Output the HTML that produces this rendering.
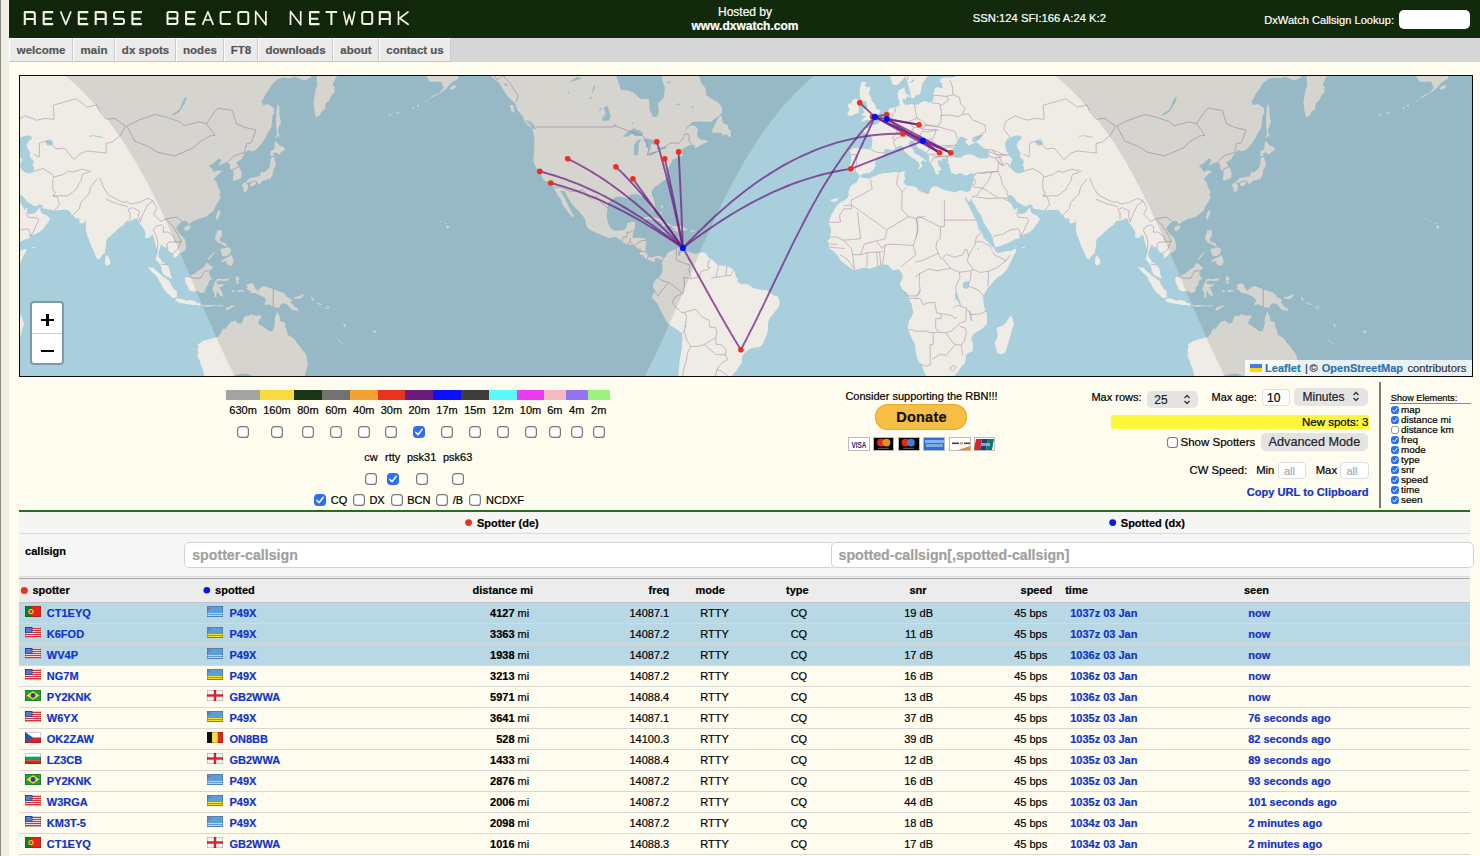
<!DOCTYPE html>
<html><head><meta charset="utf-8"><title>Reverse Beacon Network</title>
<style>
html,body{margin:0;padding:0;width:1480px;height:856px;overflow:hidden;background:#fefcee;font-family:'Liberation Sans', sans-serif;}
body>div,body>span,body>svg{position:absolute;}
span{line-height:1;white-space:pre;-webkit-text-stroke:0.2px currentColor;}
</style></head><body>
<div style="left:0px;top:0px;width:1px;height:856px;background:#8a8a80"></div>
<div style="left:1px;top:0px;width:8px;height:856px;background:#f0f0e6"></div>
<div style="left:9px;top:0px;width:1471px;height:38px;background:#12290b"></div>
<div style="left:9px;top:0px;width:400px;height:35px;background:#11250a"></div>
<svg style="left:0;top:0" width="420" height="38"><g fill="none" stroke="#f2f2ea" stroke-linecap="butt" stroke-linejoin="round"><path transform="translate(23.8,11.1)" d="M1,13.8 V1 H9 Q11,1 11,3 V13.8 M1,7.9 H11" stroke-width="2.1"/><path transform="translate(42.7,11.1)" d="M10.5,1 H1 V13 H10.5 M1,7.6 H9.3" stroke-width="2.1"/><path transform="translate(59.8,11.1)" d="M0.8,0.3 L6,13.3 L11.2,0.3" stroke-width="1.7"/><path transform="translate(77.8,11.1)" d="M10.5,1 H1 V13 H10.5 M1,7.6 H9.3" stroke-width="2.1"/><path transform="translate(94.7,11.1)" d="M1,13.8 V1 H9 Q11,1 11,3 V13.8 M1,7.9 H11" stroke-width="2.1"/><path transform="translate(113.0,11.1)" d="M11,1 H3 Q1,1 1,3 V5.6 Q1,7.6 3,7.6 H9 Q11,7.6 11,9.6 V11 Q11,13 9,13 H0.5" stroke-width="2.0"/><path transform="translate(131.4,11.1)" d="M10.5,1 H1 V13 H10.5 M1,7.6 H9.3" stroke-width="2.1"/><path transform="translate(166.5,11.1)" d="M1,1 H9 Q11,1 11,3 V5.4 Q11,7.4 9,7.4 H1 M9,7.4 Q11,7.4 11,9.4 V11 Q11,13 9,13 H1 V1" stroke-width="2.0"/><path transform="translate(185.1,11.1)" d="M10.5,1 H1 V13 H10.5 M1,7.6 H9.3" stroke-width="2.1"/><path transform="translate(201.9,11.1)" d="M0.6,13.8 L6,0.6 L11.4,13.8 M2.8,8.9 H9.2" stroke-width="1.7"/><path transform="translate(219.6,11.1)" d="M11.3,1 H3 Q1,1 1,3 V11 Q1,13 3,13 H11.3" stroke-width="2.0"/><path transform="translate(237.3,11.1)" d="M3,1 H9 Q11,1 11,3 V11 Q11,13 9,13 H3 Q1,13 1,11 V3 Q1,1 3,1 Z" stroke-width="2.0"/><path transform="translate(254.8,11.1)" d="M0.9,14 V0.3 L11.1,13.7 V0" stroke-width="1.7"/><path transform="translate(289.6,11.1)" d="M0.9,14 V0.3 L11.1,13.7 V0" stroke-width="1.7"/><path transform="translate(309.0,11.1)" d="M10.5,1 H1 V13 H10.5 M1,7.6 H9.3" stroke-width="2.1"/><path transform="translate(325.6,11.1)" d="M0,1 H11.5 M5.8,1 V14" stroke-width="2.0"/><path transform="translate(343.2,11.1)" d="M0.4,0.3 L3.2,13.5 L6,3.5 L8.8,13.5 L11.6,0.3" stroke-width="1.6"/><path transform="translate(361.2,11.1)" d="M3,1 H9 Q11,1 11,3 V11 Q11,13 9,13 H3 Q1,13 1,11 V3 Q1,1 3,1 Z" stroke-width="2.0"/><path transform="translate(378.8,11.1)" d="M1,13.8 V1 H9 Q11,1 11,3 V13.8 M1,7.9 H11" stroke-width="2.1"/><path transform="translate(397.5,11.1)" d="M1,0 V14 M11,0.5 L2.2,7.2 L11.2,13.6" stroke-width="1.7"/></g></svg>
<span style="left:745px;transform:translateX(-50%);top:5.84px;font-size:12px;font-weight:400;color:#fff;">Hosted by</span>
<span style="left:745px;transform:translateX(-50%);top:19.84px;font-size:12px;font-weight:700;color:#fff;">www.dxwatch.com</span>
<span style="left:972.8px;top:13.28px;font-size:11.25px;font-weight:400;color:#fff;">SSN:124 SFI:166 A:24 K:2</span>
<span style="left:1264.3px;top:14.90px;font-size:11.1px;font-weight:400;color:#fff;">DxWatch Callsign Lookup:</span>
<div style="left:1399px;top:10px;width:71px;height:19px;background:#fff;border-radius:5px"></div>
<div style="left:9px;top:38px;width:1471px;height:24px;background:#d6d6d6"></div>
<div style="left:9px;top:38px;width:64px;height:24px;background:#ebebeb;border-top:1px solid #fff;border-left:1px solid #fff;border-right:1px solid #c9c9c9;border-bottom:1px solid #c4c4c4;box-sizing:border-box"></div>
<span style="left:41.0px;transform:translateX(-50%);top:45.07px;font-size:11.5px;font-weight:700;color:#555;">welcome</span>
<div style="left:73px;top:38px;width:42px;height:24px;background:#ebebeb;border-top:1px solid #fff;border-left:1px solid #fff;border-right:1px solid #c9c9c9;border-bottom:1px solid #c4c4c4;box-sizing:border-box"></div>
<span style="left:94.0px;transform:translateX(-50%);top:45.07px;font-size:11.5px;font-weight:700;color:#555;">main</span>
<div style="left:115px;top:38px;width:61px;height:24px;background:#ebebeb;border-top:1px solid #fff;border-left:1px solid #fff;border-right:1px solid #c9c9c9;border-bottom:1px solid #c4c4c4;box-sizing:border-box"></div>
<span style="left:145.5px;transform:translateX(-50%);top:45.07px;font-size:11.5px;font-weight:700;color:#555;">dx spots</span>
<div style="left:176px;top:38px;width:48px;height:24px;background:#ebebeb;border-top:1px solid #fff;border-left:1px solid #fff;border-right:1px solid #c9c9c9;border-bottom:1px solid #c4c4c4;box-sizing:border-box"></div>
<span style="left:200.0px;transform:translateX(-50%);top:45.07px;font-size:11.5px;font-weight:700;color:#555;">nodes</span>
<div style="left:224px;top:38px;width:34px;height:24px;background:#ebebeb;border-top:1px solid #fff;border-left:1px solid #fff;border-right:1px solid #c9c9c9;border-bottom:1px solid #c4c4c4;box-sizing:border-box"></div>
<span style="left:241.0px;transform:translateX(-50%);top:45.07px;font-size:11.5px;font-weight:700;color:#555;">FT8</span>
<div style="left:258px;top:38px;width:75px;height:24px;background:#ebebeb;border-top:1px solid #fff;border-left:1px solid #fff;border-right:1px solid #c9c9c9;border-bottom:1px solid #c4c4c4;box-sizing:border-box"></div>
<span style="left:295.5px;transform:translateX(-50%);top:45.07px;font-size:11.5px;font-weight:700;color:#555;">downloads</span>
<div style="left:333px;top:38px;width:46px;height:24px;background:#ebebeb;border-top:1px solid #fff;border-left:1px solid #fff;border-right:1px solid #c9c9c9;border-bottom:1px solid #c4c4c4;box-sizing:border-box"></div>
<span style="left:356.0px;transform:translateX(-50%);top:45.07px;font-size:11.5px;font-weight:700;color:#555;">about</span>
<div style="left:379px;top:38px;width:72px;height:24px;background:#ebebeb;border-top:1px solid #fff;border-left:1px solid #fff;border-right:1px solid #c9c9c9;border-bottom:1px solid #c4c4c4;box-sizing:border-box"></div>
<span style="left:415.0px;transform:translateX(-50%);top:45.07px;font-size:11.5px;font-weight:700;color:#555;">contact us</span>
<div style="left:19px;top:75px;width:1454px;height:302px;border:1px solid #0a0a0a;box-sizing:border-box;overflow:hidden;background:#a9cfdd"><svg width="1452" height="300" style="position:absolute;left:0;top:0;display:block"><rect width="1452" height="300" fill="#a9cfdd"/><g id="wld"><path d="M393.5,-113.5 393.5,-38.0 401.8,-12.9 403.1,-4.3 410.0,6.0 421.0,5.5 423.8,11.8 419.6,16.8 412.8,19.8 407.2,25.1 402.3,27.0 412.8,21.2 422.4,15.8 426.5,12.3 432.0,6.0 438.1,2.8 438.3,-4.8 444.4,0.1 451.2,-6.5 459.5,-1.5 470.5,0.1 478.8,6.6 482.9,13.3 488.4,21.2 495.2,27.5 497.2,33.5 502.7,40.2 504.6,44.2 510.4,48.9 512.6,53.5 514.5,62.4 514.2,74.8 513.4,84.4 515.0,89.4 518.6,94.6 520.3,98.1 523.9,104.5 529.6,106.5 533.2,110.8 535.1,114.6 537.3,118.8 541.5,124.2 542.0,127.9 547.2,135.0 548.9,137.4 553.0,141.3 554.4,140.1 552.2,137.4 549.7,132.5 546.4,125.7 543.4,120.1 539.8,114.6 544.8,115.3 547.0,120.1 550.8,126.4 554.9,131.3 558.5,135.0 562.6,139.5 565.4,144.0 565.9,148.4 568.1,152.2 573.6,155.7 579.1,158.0 584.6,160.6 590.1,162.3 595.1,160.8 599.8,163.4 601.7,165.7 605.2,167.4 609.4,168.5 614.0,169.4 615.4,170.2 619.0,173.9 619.8,175.6 620.1,178.6 622.9,179.5 625.6,182.8 627.8,183.4 631.4,185.0 634.4,185.9 635.5,185.0 634.1,183.4 636.6,181.7 639.6,182.8 640.7,183.9 642.9,185.6 643.2,182.5 641.5,181.1 638.2,179.8 635.5,180.3 632.2,181.4 629.5,180.9 627.2,178.4 625.6,176.1 625.3,172.2 626.1,166.5 626.7,164.3 623.1,162.0 619.0,161.7 614.0,162.0 612.7,162.3 613.0,158.0 613.5,154.2 614.9,151.3 615.1,146.0 611.9,145.7 607.2,146.9 606.6,150.4 604.1,153.9 600.3,154.2 595.6,155.1 592.0,153.3 589.9,151.3 587.9,146.0 586.8,142.5 586.8,136.5 587.9,130.4 588.2,126.7 591.5,123.9 595.6,121.0 599.8,120.4 605.2,122.0 609.6,122.3 609.4,118.8 613.2,118.2 617.6,118.2 620.9,120.4 624.5,119.4 627.2,122.6 628.1,126.0 630.5,131.6 632.8,134.7 634.4,134.0 635.2,130.4 633.9,124.2 631.9,118.5 631.6,115.3 633.6,112.1 637.7,109.1 641.0,106.8 644.6,104.1 647.6,101.5 646.5,96.7 646.8,94.3 648.7,91.5 649.5,89.4 651.7,86.5 652.0,84.0 656.1,82.2 660.2,80.3 663.0,79.6 661.4,76.3 661.4,73.6 664.9,71.4 668.5,69.4 671.2,68.3 674.0,69.1 675.4,72.5 679.5,69.8 682.2,68.3 687.8,66.0 686.9,64.0 682.2,64.0 678.1,62.0 677.0,58.0 678.1,53.5 675.4,50.1 669.9,49.7 664.4,55.5 667.1,51.0 672.6,45.9 680.9,45.5 690.5,45.9 697.9,40.7 702.0,37.1 702.0,31.2 697.4,26.0 691.9,23.2 686.4,19.3 685.5,12.3 680.9,6.6 678.1,-3.2 674.0,-7.1 663.0,-12.9 641.0,-15.8 594.2,-113.5ZM643.2,182.5 645.7,181.1 647.6,177.2 649.8,175.3 652.0,174.7 656.1,173.0 658.6,171.6 660.0,173.6 658.3,175.6 658.6,177.8 660.2,180.3 660.2,177.2 662.7,174.2 664.4,174.2 668.0,175.8 671.2,176.7 675.4,178.1 679.5,176.4 685.0,176.4 686.4,178.1 687.8,181.1 690.5,182.5 694.6,185.9 698.2,189.5 704.2,189.7 708.4,190.6 712.5,192.8 714.7,195.0 715.8,200.5 718.0,203.2 717.5,206.0 721.9,208.5 724.9,207.7 729.0,208.8 733.1,212.3 737.2,212.9 741.4,214.0 746.9,214.3 749.6,216.2 753.2,219.2 757.6,220.3 759.2,223.9 759.8,228.1 758.4,231.4 755.7,234.8 752.9,238.1 749.6,242.1 748.2,246.3 747.7,254.9 746.3,260.1 744.4,263.9 742.8,268.0 740.0,271.0 735.9,271.3 732.3,271.9 727.6,274.3 723.5,278.0 721.9,281.6 721.6,287.5 718.8,290.7 716.1,295.1 713.0,298.3 710.9,303.5 708.1,306.5 704.5,308.5 700.7,308.5 697.1,306.9 694.6,305.5 694.6,307.5 698.2,311.9 697.1,319.1 691.9,321.9 685.0,322.6 684.2,328.4 676.8,329.8 676.2,335.4 678.1,337.2 675.4,344.9 669.9,349.6 654.8,348.8 653.1,337.2 652.8,328.0 653.4,319.1 655.9,310.5 658.3,303.2 658.9,294.1 659.4,286.3 660.8,278.6 661.9,271.0 662.5,262.2 662.2,257.5 659.1,255.2 655.6,252.6 650.6,249.4 646.8,246.3 645.7,243.5 643.2,239.2 640.2,233.6 637.4,227.8 635.2,225.0 632.5,222.5 632.2,219.8 634.1,216.7 635.5,214.3 633.0,212.1 633.0,208.8 635.2,204.3 636.9,202.7 638.8,201.6 641.0,198.6 642.6,195.3 642.6,190.9 642.1,188.1 641.3,186.1 642.4,184.5ZM869.2,-113.5 869.2,-12.9 869.2,-7.1 869.8,-1.5 870.9,3.4 872.3,7.6 874.8,9.2 878.0,8.7 881.6,4.4 884.6,1.8 885.2,-1.0 886.3,3.4 888.0,7.6 888.8,11.8 890.4,16.8 890.7,19.8 886.9,18.3 885.2,16.3 884.6,11.2 881.9,12.8 879.1,13.8 877.8,16.8 878.0,22.2 879.1,24.6 879.7,29.3 875.3,31.2 872.5,31.7 869.2,32.6 868.1,35.8 866.5,40.2 863.8,41.6 859.9,42.9 859.6,46.3 856.0,48.5 852.2,49.3 850.5,48.0 851.1,52.2 847.2,51.8 842.6,53.1 843.7,56.0 848.6,58.0 850.0,59.2 852.2,62.4 852.2,67.1 851.6,71.0 850.5,73.3 845.9,72.9 840.4,72.5 833.5,72.1 829.9,74.4 831.0,78.5 831.3,82.2 830.8,87.2 829.4,90.1 831.3,91.8 831.0,96.3 834.9,95.6 837.9,97.0 839.0,99.1 840.1,99.8 840.6,100.1 838.2,103.1 836.8,106.5 832.1,108.8 829.9,111.4 828.5,115.6 828.8,118.8 827.5,121.7 823.9,124.8 820.0,126.4 815.6,131.3 813.7,135.0 811.5,138.6 810.1,142.5 808.5,146.9 810.4,151.0 811.2,155.1 810.4,159.7 809.6,162.8 807.4,165.1 808.8,166.8 809.3,169.4 809.3,171.9 811.0,173.6 813.7,175.6 815.4,177.5 817.8,179.5 819.2,182.5 821.1,185.3 823.9,187.0 826.9,189.2 830.8,192.5 834.6,193.9 839.0,192.8 844.5,191.7 848.6,192.8 852.8,191.7 858.2,189.7 862.4,188.6 865.1,188.4 868.1,188.9 870.6,192.0 872.5,194.2 875.3,193.9 878.9,193.3 880.2,195.0 882.5,198.0 882.5,202.7 881.1,205.4 879.7,208.5 881.9,212.6 886.0,216.7 888.5,219.8 889.3,223.1 891.2,227.0 892.4,232.2 893.5,236.2 891.2,241.5 889.3,244.3 888.0,250.0 888.0,254.3 889.9,257.8 892.4,263.6 895.1,268.6 895.6,275.5 897.3,282.5 899.2,286.3 901.7,288.8 903.4,294.1 905.5,298.0 905.8,302.9 906.1,306.2 909.1,308.2 911.0,308.2 917.4,305.5 922.9,305.9 926.5,304.9 929.8,303.9 933.9,300.6 938.0,296.1 940.8,291.6 944.6,287.2 946.0,281.6 945.7,279.5 947.9,277.3 952.6,274.9 953.1,268.0 952.3,265.7 951.2,261.9 954.0,257.8 958.1,254.9 962.8,252.0 966.9,248.3 967.1,243.5 966.9,237.3 965.0,233.6 963.9,229.5 963.6,225.3 962.2,223.1 963.3,219.8 964.7,217.8 966.3,214.3 968.2,211.5 970.5,209.3 972.6,206.8 975.1,203.8 977.9,201.0 981.5,199.1 984.8,196.1 987.5,192.2 989.7,188.1 991.6,183.9 993.8,179.5 995.5,176.7 996.6,173.0 994.6,173.0 991.1,174.7 986.1,175.3 980.9,176.4 977.3,177.2 974.6,173.9 974.3,171.9 975.1,170.8 977.3,171.1 979.5,170.2 983.4,168.8 988.0,167.1 990.8,165.4 994.6,163.4 999.0,162.3 1000.1,160.0 1002.9,159.1 1007.6,157.1 1010.9,155.1 1013.1,153.1 1014.5,151.0 1016.4,148.4 1018.6,145.7 1020.0,142.8 1017.2,139.5 1013.6,138.3 1011.2,136.5 1010.3,133.4 1010.6,131.0 1008.1,133.4 1005.7,136.5 1002.6,137.7 998.5,138.0 997.1,136.5 997.4,133.1 996.3,131.6 995.2,133.7 994.4,134.0 993.0,130.7 991.6,128.5 989.1,125.4 986.7,122.0 987.8,119.8 989.7,118.8 991.6,119.4 993.5,121.0 995.2,122.9 997.1,126.0 1000.1,127.6 1003.2,129.5 1006.2,130.4 1009.5,128.5 1012.0,129.1 1013.1,132.5 1016.4,133.1 1024.6,134.4 1030.1,134.0 1035.6,133.7 1038.9,134.4 1040.3,136.2 1041.1,138.3 1043.9,139.8 1044.2,141.6 1047.5,142.8 1048.5,141.6 1049.7,144.5 1049.4,146.9 1051.3,147.5 1054.9,146.3 1055.2,143.1 1056.0,146.3 1056.0,151.0 1055.7,153.1 1056.5,156.2 1057.3,160.0 1058.5,162.6 1059.3,164.8 1060.4,167.4 1061.5,170.5 1063.1,174.2 1064.2,175.6 1065.3,178.9 1066.2,181.4 1068.6,183.7 1070.5,181.4 1071.4,180.3 1073.6,177.5 1075.0,177.2 1075.0,174.2 1076.0,169.9 1076.3,164.3 1077.7,161.7 1080.2,160.6 1081.8,158.5 1085.1,155.7 1088.7,152.2 1090.9,150.4 1093.4,149.3 1094.5,146.9 1097.2,144.5 1099.4,145.1 1102.5,144.3 1104.7,142.8 1107.1,142.2 1108.0,143.7 1109.3,146.9 1110.2,148.1 1112.3,150.7 1113.5,152.8 1114.8,154.8 1115.4,158.0 1114.8,161.4 1116.8,162.0 1119.0,161.7 1120.9,160.0 1122.8,158.8 1123.9,161.4 1124.5,164.8 1125.5,168.5 1126.7,172.8 1127.2,176.7 1126.4,180.0 1125.8,183.4 1126.7,184.8 1128.6,186.7 1131.3,190.9 1131.6,194.2 1133.2,198.0 1135.5,199.9 1138.5,201.0 1140.1,202.4 1142.0,202.1 1140.4,198.6 1139.8,194.4 1138.5,190.9 1136.3,188.9 1134.1,187.0 1131.6,185.6 1130.5,183.1 1128.3,180.3 1128.3,177.2 1129.4,173.9 1130.5,171.1 1131.3,168.5 1133.0,169.4 1133.0,171.1 1135.2,171.1 1137.7,172.5 1138.8,175.3 1141.5,177.0 1143.7,178.1 1143.7,182.0 1144.8,181.7 1147.8,179.8 1149.2,177.2 1151.7,176.7 1154.4,174.7 1156.1,172.8 1155.8,168.5 1155.0,163.4 1153.3,161.4 1150.6,158.8 1148.4,156.2 1146.5,153.3 1146.5,151.6 1148.4,149.0 1150.3,146.9 1152.5,145.4 1154.7,144.8 1157.2,145.4 1158.5,147.2 1158.5,149.0 1159.7,147.8 1162.1,145.4 1165.4,144.3 1167.6,143.1 1169.8,142.5 1173.4,141.6 1176.4,140.4 1179.2,138.0 1181.7,136.2 1184.1,134.0 1185.2,130.4 1186.9,127.9 1189.1,124.8 1190.5,121.7 1189.3,118.5 1191.0,116.6 1189.9,114.3 1188.2,111.7 1187.4,109.1 1186.3,105.5 1183.6,103.8 1185.2,101.5 1187.2,99.4 1189.6,97.0 1192.4,95.3 1189.6,94.6 1186.6,94.6 1183.3,96.0 1182.5,93.2 1180.0,91.1 1178.9,89.4 1181.4,88.6 1183.8,87.2 1186.0,85.1 1189.1,82.5 1191.5,84.0 1189.6,87.6 1188.8,90.1 1191.0,88.6 1193.8,86.9 1197.0,86.2 1199.2,87.2 1200.1,89.4 1200.1,92.9 1202.0,93.9 1203.7,95.6 1203.4,99.8 1202.8,103.1 1203.7,105.1 1206.1,104.1 1208.9,103.1 1211.1,102.1 1211.6,99.1 1211.3,95.6 1210.2,93.2 1208.9,91.1 1207.0,88.3 1206.4,86.5 1208.9,84.7 1212.2,82.5 1212.7,80.0 1214.9,77.4 1216.6,75.5 1219.3,74.0 1221.8,75.5 1226.2,73.6 1228.4,71.4 1232.0,67.1 1235.5,62.0 1237.5,57.2 1241.3,51.8 1241.9,45.9 1242.4,40.2 1244.3,36.7 1243.8,32.1 1241.6,30.3 1237.8,27.9 1233.3,29.3 1231.4,26.0 1233.1,23.2 1235.5,18.3 1239.1,13.3 1243.2,7.1 1247.4,3.4 1252.9,1.8 1259.8,2.3 1265.2,0.7 1271.3,3.4 1275.7,3.9 1280.4,1.8 1282.6,-3.2 1286.2,-9.9 1287.2,9.2 1285.6,13.8 1284.5,20.3 1283.4,26.5 1284.5,34.4 1285.9,41.6 1289.2,39.8 1291.7,35.8 1295.2,32.6 1295.5,27.5 1299.6,24.1 1301.5,18.8 1304.3,16.8 1304.6,10.2 1302.4,9.7 1305.7,1.8 1310.1,-3.2 1314.8,-3.7 1323.0,-1.5 1329.9,-7.1 1336.8,-12.9 1350.5,-31.4 1350.5,-113.5ZM839.8,46.3 844.0,45.0 847.2,43.7 851.4,44.2 856.9,43.3 859.4,41.6 857.4,39.3 860.2,35.8 860.2,34.0 856.3,33.0 855.8,30.7 853.9,26.5 851.9,25.6 851.1,21.7 849.7,19.3 848.4,17.8 850.0,14.3 850.5,11.2 845.9,10.7 844.5,9.7 846.7,6.0 841.8,6.0 840.6,9.2 839.8,12.8 840.1,17.3 839.3,21.2 841.8,24.1 842.9,25.6 845.9,24.6 846.7,27.9 847.5,31.2 847.0,32.6 842.9,32.1 843.4,34.4 844.2,36.7 841.2,38.9 844.0,39.8 846.7,40.7 844.0,41.6 841.8,44.6ZM838.7,37.1 839.0,32.6 838.5,29.3 840.4,26.5 839.0,23.7 835.4,22.7 832.7,23.7 831.9,27.0 828.0,27.9 828.3,31.2 829.9,34.0 827.2,37.1 828.5,39.8 832.1,39.8 834.9,38.0ZM889.6,92.5 892.6,92.2 898.4,91.8 897.3,95.6 897.0,97.4 894.8,97.0 889.9,94.3ZM878.0,82.2 881.6,81.4 882.5,84.0 881.9,89.0 880.0,89.7 878.6,89.0 878.6,84.4ZM879.1,77.4 881.1,75.2 881.6,75.9 881.6,78.5 880.8,80.7 879.7,80.0ZM920.1,101.1 922.3,101.8 925.6,101.8 927.8,102.5 926.5,103.1 923.4,103.5 920.4,102.5ZM944.3,103.1 946.2,101.8 950.6,100.8 948.7,103.1 948.7,104.5 945.1,104.1ZM1075.0,187.3 1075.2,182.5 1076.0,178.9 1077.7,180.3 1079.3,182.8 1080.7,185.9 1079.6,188.6 1077.2,189.7 1075.5,188.6ZM991.1,239.2 992.7,243.5 994.1,249.2 992.5,252.0 991.4,256.3 989.7,262.2 987.5,269.5 985.3,276.4 980.6,278.6 977.0,276.4 975.7,271.0 974.6,266.6 977.0,263.0 977.6,257.8 976.5,253.5 977.9,251.2 982.0,250.0 985.6,247.2 987.5,244.3 989.7,240.9ZM1215.5,106.5 1217.1,104.8 1219.9,102.1 1222.6,101.5 1226.8,100.8 1229.5,100.4 1231.7,95.3 1233.3,96.7 1236.4,94.6 1239.1,91.8 1240.5,87.6 1240.5,84.0 1241.3,81.4 1244.1,81.1 1244.6,84.0 1246.0,87.6 1244.6,91.8 1243.2,93.6 1243.0,97.0 1242.2,99.8 1240.5,102.5 1240.0,103.5 1238.3,102.5 1237.2,104.1 1233.6,104.5 1232.0,105.5 1230.0,107.8 1228.7,108.1 1227.0,105.5 1224.5,104.5 1222.1,105.1 1219.0,106.5 1216.3,106.8ZM1240.5,80.3 1240.8,77.0 1240.0,76.3 1241.9,74.0 1244.3,73.3 1244.9,66.0 1246.0,65.2 1249.6,69.4 1253.7,71.0 1255.3,73.6 1251.0,76.3 1249.6,78.5 1245.2,76.3 1243.0,77.4 1243.5,79.6ZM1211.9,108.5 1214.1,106.8 1215.8,106.8 1217.7,108.8 1218.2,111.4 1216.6,115.0 1214.9,116.3 1213.5,115.0 1213.5,111.4 1212.5,110.4ZM1219.9,108.8 1220.7,106.8 1222.9,105.8 1225.7,105.8 1225.9,107.8 1224.5,109.1 1221.5,110.4ZM1245.7,62.8 1247.1,57.2 1246.3,51.8 1246.0,44.6 1246.5,35.8 1247.7,27.5 1249.3,31.2 1249.6,40.2 1251.0,45.9 1249.3,50.1 1247.7,55.1 1250.1,60.8 1247.7,60.0ZM1185.8,141.0 1187.2,136.8 1188.2,134.4 1190.7,135.0 1189.9,138.0 1188.2,141.9 1187.7,144.3 1186.3,142.5ZM1154.2,152.2 1155.8,150.1 1158.5,149.6 1160.8,150.7 1159.4,153.3 1156.9,155.1 1154.4,154.2ZM1187.2,154.2 1189.6,153.9 1191.5,154.2 1192.1,158.0 1191.5,160.6 1189.9,162.6 1190.5,166.0 1193.2,166.5 1196.0,167.4 1196.8,171.1 1194.8,169.9 1192.7,168.8 1190.5,167.4 1187.7,166.8 1187.2,165.4 1185.5,163.7 1185.0,160.6 1186.3,159.1 1186.6,156.5ZM1190.7,173.0 1195.1,171.9 1198.2,171.3 1200.6,172.5 1200.9,175.6 1199.2,178.4 1197.3,179.5 1194.6,180.6 1192.4,179.8 1191.5,177.0 1190.7,175.6ZM1190.7,186.7 1192.4,183.9 1195.1,182.3 1198.7,181.1 1200.6,178.9 1202.3,180.6 1203.7,185.3 1202.5,188.4 1200.6,190.3 1199.2,189.2 1196.5,188.1 1196.2,185.0 1192.7,185.9ZM1177.8,182.8 1180.5,179.8 1183.6,176.4 1184.7,174.7 1184.1,177.2 1181.7,180.6 1178.9,183.7ZM1155.2,201.9 1156.9,200.2 1159.4,201.0 1161.8,199.1 1164.9,197.7 1167.6,195.5 1170.4,193.3 1172.8,192.0 1175.0,189.2 1176.7,186.7 1179.2,188.4 1180.8,190.0 1183.3,191.4 1181.1,193.6 1179.5,195.0 1179.2,197.7 1180.0,199.9 1182.5,203.2 1180.0,203.8 1178.6,206.0 1178.3,208.8 1176.2,210.7 1175.6,213.2 1174.5,216.2 1170.7,217.0 1167.1,214.8 1163.0,215.4 1158.8,214.0 1158.0,210.4 1156.1,207.9 1155.2,204.9ZM1117.6,190.6 1120.9,191.7 1123.6,191.7 1125.8,194.4 1129.7,197.2 1131.9,199.9 1134.1,201.0 1136.8,203.2 1139.8,204.9 1141.0,208.8 1142.6,211.2 1144.2,213.7 1146.5,214.8 1147.0,217.0 1146.5,222.0 1144.8,221.7 1142.9,222.3 1140.1,219.5 1136.8,216.7 1133.8,213.2 1131.6,208.8 1129.4,205.7 1127.8,201.6 1125.0,198.8 1122.5,196.4 1120.3,193.9ZM1144.8,224.7 1147.0,222.5 1149.8,222.5 1153.3,223.4 1156.6,224.7 1159.7,223.9 1162.4,224.5 1165.2,225.0 1166.2,227.0 1170.4,227.5 1170.1,230.0 1166.8,228.9 1162.1,228.9 1158.0,228.3 1153.9,227.5 1149.8,226.7 1145.6,225.0ZM1171.8,228.6 1174.5,229.2 1177.2,228.9 1181.4,228.9 1185.0,229.5 1188.2,229.5 1193.2,228.9 1192.7,230.3 1186.9,230.3 1181.7,230.3 1177.2,231.1 1173.1,230.3ZM1196.5,231.7 1199.8,229.7 1205.3,229.2 1201.5,231.7 1197.6,234.2 1195.1,234.5ZM1184.1,221.1 1184.4,217.6 1183.8,215.4 1182.2,214.0 1183.6,210.1 1185.0,206.0 1186.0,204.1 1188.0,202.4 1192.4,203.2 1197.0,202.7 1199.8,201.6 1198.2,204.6 1194.3,204.9 1189.6,204.6 1186.3,205.4 1187.2,208.2 1189.6,208.5 1192.7,208.2 1194.8,208.5 1191.8,210.7 1189.3,211.2 1191.0,214.3 1192.9,218.4 1192.7,220.9 1190.5,219.2 1188.2,217.3 1187.2,214.3 1186.3,218.7 1186.6,221.4ZM1205.8,201.0 1207.8,199.9 1209.4,203.2 1207.5,204.9 1209.2,206.8 1207.0,208.2 1206.1,204.6ZM1207.5,214.3 1211.6,213.7 1215.2,215.4 1211.9,215.6 1208.0,215.9ZM1201.7,214.8 1204.2,214.3 1205.3,215.6 1202.8,216.5ZM1215.8,209.6 1218.0,208.2 1220.7,207.1 1224.0,208.5 1224.8,211.8 1227.6,215.1 1230.3,212.1 1233.6,210.1 1236.4,210.7 1240.5,212.3 1243.2,213.2 1247.4,214.8 1250.4,215.9 1252.9,216.5 1256.5,219.5 1256.5,221.1 1261.1,223.1 1262.0,224.7 1260.3,226.4 1262.5,228.1 1264.4,230.9 1267.5,232.0 1268.0,234.2 1270.2,235.3 1266.6,234.8 1262.5,233.9 1259.8,231.7 1258.4,229.7 1256.5,228.1 1252.9,227.2 1250.1,228.9 1249.8,230.9 1247.4,231.7 1243.2,231.1 1240.5,228.9 1237.8,228.3 1235.0,229.2 1234.5,226.7 1236.4,225.3 1235.0,222.5 1232.2,220.3 1228.1,218.4 1224.5,217.0 1221.2,217.3 1220.4,215.6 1218.5,214.0 1216.3,212.9 1218.2,211.0ZM1263.3,221.4 1268.0,220.6 1272.1,218.4 1274.0,217.8 1272.4,220.9 1269.4,223.1 1265.2,222.8ZM1167.6,268.0 1169.5,267.5 1173.1,265.1 1176.4,263.9 1180.0,263.0 1184.1,261.9 1188.2,260.7 1190.5,257.8 1191.8,254.9 1193.8,252.0 1196.0,253.5 1196.5,251.2 1198.7,248.6 1200.6,246.3 1202.5,245.2 1205.3,244.6 1208.0,247.4 1210.5,247.7 1212.2,246.6 1213.5,242.6 1214.1,240.7 1216.6,239.8 1220.2,239.5 1220.2,237.8 1222.6,239.0 1226.8,239.8 1229.5,239.2 1231.7,240.1 1230.9,242.6 1229.2,243.2 1228.1,247.4 1230.9,249.4 1234.2,251.4 1237.2,253.5 1238.8,254.9 1242.2,255.2 1243.8,252.0 1244.9,246.9 1244.6,242.9 1245.7,239.2 1247.4,235.6 1248.8,238.7 1250.1,241.5 1250.1,244.9 1252.9,245.7 1255.3,247.4 1255.1,250.6 1257.0,254.9 1257.8,258.9 1261.1,260.7 1264.7,263.3 1266.6,266.6 1268.8,268.9 1270.2,270.7 1272.4,274.0 1274.9,277.0 1276.5,280.1 1277.1,284.7 1277.9,288.4 1276.2,294.1 1275.2,299.0 1271.8,303.9 1270.8,307.2 1268.5,312.2 1268.0,317.0 1262.5,318.8 1257.0,322.6 1252.9,319.8 1246.0,320.2 1241.9,319.1 1239.1,315.7 1236.4,310.5 1235.0,308.9 1234.5,302.2 1232.8,304.9 1229.5,308.5 1227.3,306.9 1224.8,302.2 1221.2,299.3 1216.3,297.4 1210.2,298.0 1202.0,299.9 1196.5,302.2 1195.1,305.2 1190.7,304.9 1185.0,305.5 1180.0,308.9 1175.9,308.9 1171.8,306.5 1173.4,303.2 1174.0,299.0 1173.1,294.1 1171.8,291.0 1170.7,288.4 1169.5,284.1 1167.3,280.4 1168.5,277.0 1167.3,274.6 1168.5,271.0ZM692.4,56.8 696.0,56.8 701.5,56.8 702.9,59.6 707.0,58.0 708.1,60.4 710.6,60.4 710.9,55.1 708.4,53.1 707.5,48.9 702.9,47.2 701.5,41.1 702.3,39.8 698.8,41.1 694.6,48.9 692.4,53.5ZM622.0,144.3 624.5,141.9 628.6,140.7 632.8,140.7 636.3,141.9 641.0,143.4 643.8,145.4 647.9,147.2 651.5,149.3 647.9,150.1 641.8,150.1 642.9,147.8 639.6,145.4 634.1,144.0 630.5,143.4 627.8,142.2 625.3,144.0ZM650.9,150.4 655.3,150.1 658.9,150.1 663.0,150.7 665.8,152.5 667.4,153.9 664.4,154.5 661.1,154.8 658.9,156.8 656.1,155.1 650.9,154.5 655.6,153.9ZM640.2,154.5 643.8,154.2 646.0,155.4 644.3,156.2 641.5,155.7ZM670.7,154.5 674.8,154.5 674.8,155.7 670.7,155.7ZM641.0,129.5 643.8,130.1 642.9,132.2 640.5,131.0ZM641.0,135.6 642.1,137.4 641.0,138.6 639.9,136.8ZM502.7,43.3 506.2,44.6 510.4,45.5 514.5,49.7 516.1,53.5 512.9,52.7 507.6,48.9ZM489.8,28.9 493.3,28.9 494.7,37.1 491.1,34.4ZM430.1,14.3 434.8,12.3 436.7,9.7 433.9,9.2 430.6,11.2ZM482.9,8.1 487.0,7.6 488.4,16.8 492.5,22.7 493.9,20.3 489.8,11.8ZM426.5,149.3 429.2,150.4 429.2,151.9 427.1,153.1 426.5,150.7ZM420.2,145.1 421.8,145.4 421.6,146.3 420.4,146.0ZM424.6,146.9 426.5,147.2 426.2,148.1 424.9,147.8ZM416.1,143.4 417.4,143.4 417.1,144.3 416.3,144.3ZM396.5,29.3 399.3,28.4 398.4,31.2ZM392.1,32.1 394.9,30.7 393.5,33.5ZM375.6,36.7 379.8,36.2 378.4,38.0ZM367.4,38.5 371.5,38.0 370.1,39.8ZM809.0,123.9 811.2,124.2 810.4,125.7 813.1,125.1 812.6,126.4 817.3,124.8 818.6,122.3ZM1306.5,262.7 1309.2,263.9 1314.2,268.9 1314.8,269.8 1312.0,267.5 1307.6,263.6ZM1342.8,254.6 1346.4,254.9 1345.8,256.9 1343.3,256.6ZM1294.1,230.9 1297.7,232.2 1299.1,233.6 1295.5,232.5ZM1286.2,225.9 1290.0,227.5 1292.8,229.2 1288.6,228.6ZM1297.2,228.9 1299.6,230.9 1298.2,231.7 1297.2,230.3ZM1280.7,220.3 1283.1,222.3 1284.0,224.7 1281.8,223.9ZM1313.4,247.2 1315.3,248.6 1315.3,252.0 1313.9,250.0ZM963.3,222.0 964.1,222.5 964.1,223.9 963.3,223.4ZM1002.1,171.1 1005.4,171.1 1004.3,171.9 1002.6,171.9ZM734.5,-0.4 737.2,-2.1 740.0,-7.1 723.5,-12.9 726.2,-6.0 730.4,-3.2Z" fill="#efece6"/><path d="M594.2,-12.9 596.5,1.2 598.4,6.6 601.1,14.3 608.0,14.3 613.5,16.8 620.4,22.7 629.2,23.2 629.5,33.5 633.3,41.6 637.4,40.2 638.8,35.8 638.0,27.5 643.8,21.7 644.9,11.8 642.1,3.9 641.0,-12.9 635.5,-25.0 608.0,-25.0ZM840.1,99.8 843.4,97.4 847.2,97.2 849.7,97.0 851.9,94.6 853.6,93.9 854.1,91.8 856.0,90.1 854.7,87.9 855.0,86.2 856.9,83.6 858.0,82.2 861.5,80.7 864.3,78.5 864.0,74.8 866.5,72.9 868.7,73.3 872.5,74.4 876.1,71.7 878.6,70.2 880.0,69.4 882.7,70.6 883.8,72.9 884.6,75.2 886.3,77.0 889.3,79.6 891.5,81.4 894.0,82.5 895.4,83.6 896.8,85.1 898.4,85.8 899.2,87.9 899.8,90.1 898.4,92.9 899.8,92.9 901.1,91.5 902.5,89.4 901.1,87.2 900.9,86.2 902.8,84.4 905.0,85.1 906.4,86.5 906.4,84.7 903.6,82.9 901.1,81.1 899.2,80.0 899.8,78.9 897.3,78.9 894.5,77.0 892.9,72.9 890.1,70.6 889.3,67.9 889.3,65.6 891.2,64.4 893.2,64.4 893.7,66.3 894.8,66.0 896.5,68.7 897.9,71.4 899.8,72.9 902.0,73.6 903.9,74.8 906.4,76.6 908.3,78.5 909.1,80.0 908.9,82.5 908.9,85.1 910.5,86.9 912.4,89.7 913.5,91.5 914.4,93.9 915.2,96.7 917.1,98.4 919.0,98.1 918.2,95.3 919.6,94.6 921.5,93.9 920.4,91.8 918.8,89.7 918.2,87.2 917.6,84.7 918.5,83.6 920.7,85.1 922.3,85.8 921.2,83.3 923.1,82.5 925.6,82.5 927.8,83.3 928.4,85.1 927.5,87.2 929.5,88.3 929.2,90.8 930.3,92.9 930.6,95.3 931.1,96.7 933.3,97.4 935.8,98.7 939.6,97.0 942.4,97.7 945.1,99.4 948.2,99.1 950.6,97.0 953.4,97.7 954.8,97.0 954.0,100.1 954.2,103.1 953.1,105.8 952.0,109.4 951.5,111.4 950.4,114.6 949.5,115.3 946.8,115.9 944.3,115.6 942.1,114.6 938.0,115.0 935.2,116.6 931.1,115.6 924.8,114.3 921.5,112.7 919.0,111.7 916.0,110.1 913.0,110.8 910.5,112.7 909.7,116.3 907.8,118.5 905.0,116.9 900.9,115.6 897.9,114.0 897.3,112.1 894.0,110.4 891.8,110.1 888.5,110.1 886.0,109.1 884.4,107.5 883.3,105.8 885.5,102.8 884.6,100.4 884.1,98.1 885.8,96.0 883.5,95.6 882.5,95.3 879.7,96.7 875.6,96.0 872.5,96.3 869.2,97.0 863.8,97.0 861.0,97.7 858.2,98.4 855.2,100.1 852.2,100.8 849.5,102.8 845.6,102.1 842.0,102.1 840.6,100.1ZM931.4,77.0 932.2,74.0 934.1,71.4 934.7,69.1 937.2,66.3 936.9,64.8 939.9,61.2 942.4,60.8 944.3,62.0 947.9,63.6 944.9,65.6 947.6,68.7 948.7,69.4 952.3,67.9 955.9,66.0 958.1,67.5 960.5,69.4 964.7,72.5 967.1,74.8 969.9,79.6 969.4,80.7 966.3,82.5 963.3,82.2 960.5,82.5 957.5,81.8 954.8,80.0 952.3,78.5 949.5,78.5 946.2,78.5 943.5,79.2 940.8,81.8 938.0,81.4 935.2,81.4 933.0,80.3 932.5,78.9ZM951.8,64.4 953.1,66.0 956.1,65.6 960.5,62.4 963.6,58.4 958.6,59.2 953.1,61.2ZM984.8,67.9 986.1,64.8 989.1,61.6 991.1,61.2 994.4,60.0 997.1,59.2 1001.2,60.0 1001.8,62.4 998.5,65.6 996.6,69.1 998.0,73.3 1000.4,76.6 999.9,80.0 1001.0,82.5 1003.7,84.0 1003.5,87.6 1002.1,88.6 1003.7,90.4 1004.0,94.3 1003.7,96.3 998.5,97.4 995.2,96.3 992.7,94.6 990.2,91.5 990.2,88.6 991.6,85.1 992.7,83.6 990.8,81.8 988.9,79.2 987.2,76.3 986.1,74.8 985.9,71.7ZM945.1,119.8 945.4,123.9 947.6,127.3 949.8,131.9 952.0,136.5 953.7,140.1 956.4,144.5 957.8,149.3 958.4,153.1 961.4,156.0 963.6,161.7 966.3,164.3 969.1,167.4 971.8,170.2 974.3,171.9 975.1,170.8 973.2,165.7 972.9,162.6 971.5,159.1 968.8,154.8 966.3,150.7 963.6,146.0 962.8,144.0 961.4,139.5 958.4,135.9 955.9,131.3 953.1,126.7 951.2,123.6 951.5,121.0 949.8,125.4 947.6,125.1ZM883.0,26.5 885.5,28.9 888.5,28.4 891.8,27.9 894.5,29.3 899.0,27.9 902.2,25.6 906.1,25.1 908.9,27.0 911.9,25.6 913.8,23.2 913.5,17.8 914.9,12.8 917.4,10.7 921.2,12.8 922.6,11.2 922.3,7.6 920.1,6.0 920.1,2.8 924.2,1.2 929.8,1.8 932.8,1.2 938.5,-1.0 935.2,-2.6 929.8,-4.3 924.2,-2.6 918.5,-1.0 916.8,-3.7 914.4,-6.0 914.1,-12.9 913.8,-21.9 918.8,-26.2 924.2,-32.7 925.1,-35.3 917.4,-36.6 913.2,-30.1 907.8,-21.9 904.2,-15.8 903.1,-8.2 902.8,-5.4 905.5,-3.2 907.2,0.7 905.5,3.4 902.5,7.1 901.4,11.8 900.9,16.3 899.5,18.3 895.6,19.3 894.5,22.2 891.2,22.2 891.0,20.3 890.1,18.8 889.6,21.2 887.1,20.3 886.3,22.7 885.2,24.1 882.7,22.2 882.5,24.6ZM602.2,60.4 606.6,60.8 612.1,58.0 614.9,60.0 622.3,60.0 623.1,57.2 620.4,55.1 613.5,52.2 609.4,55.1ZM614.0,78.5 614.9,79.6 617.4,78.9 618.5,74.8 619.0,67.1 621.2,63.6 617.6,64.0 614.0,69.1 613.8,74.8ZM622.6,64.0 626.4,62.4 631.4,63.6 635.5,65.2 634.7,69.1 630.8,67.5 630.8,73.6 628.9,74.8 628.6,71.0 625.9,71.0 626.1,67.1ZM626.1,79.6 631.4,79.6 638.2,75.5 635.0,75.5 630.0,77.4ZM636.0,73.6 645.7,72.9 646.0,70.2 642.4,71.0 637.4,72.1ZM582.7,45.0 588.8,44.6 590.7,40.2 587.4,29.8 583.8,31.2 585.5,38.0ZM946.0,205.2 948.7,205.7 949.3,207.1 948.7,211.5 946.2,213.2 943.0,211.5 942.7,208.8 944.0,206.0ZM936.1,215.4 937.5,218.4 939.4,223.9 940.8,228.1 941.3,230.0 939.9,229.5 937.5,224.7 936.1,221.1ZM949.8,232.5 951.2,237.8 952.6,245.7 950.6,244.9 949.3,237.8ZM1140.7,39.8 1144.8,38.9 1149.8,35.3 1155.2,26.5 1156.9,20.7 1154.2,22.2 1150.0,32.6 1146.2,35.8 1142.0,38.5ZM1059.0,61.2 1063.1,60.0 1068.1,61.2 1073.6,62.0 1072.2,60.8 1064.5,59.2 1059.5,59.6ZM1015.5,65.2 1020.0,63.2 1023.2,66.0 1021.9,69.1 1017.8,69.8 1016.1,67.9ZM572.2,149.6 573.6,149.0 571.4,149.0ZM619.0,175.6 621.2,174.2 619.8,171.9 618.5,173.9ZM663.5,249.2 666.3,249.7 666.9,251.7 664.6,250.6ZM545.3,82.9 547.0,80.0 545.9,80.3 544.8,82.2ZM514.5,-38.0 531.0,-25.0 547.5,-38.0ZM957.2,171.9 958.9,172.2 958.6,173.9 957.5,173.3ZM658.0,175.8 659.4,175.8 660.2,179.8 657.8,179.2ZM938.0,-7.1 943.5,-12.9 946.2,-9.9 940.8,-4.3ZM889.9,6.6 894.0,2.8 894.0,5.0 891.2,7.1ZM548.9,6.0 557.1,0.7 562.6,2.3 555.8,4.4ZM572.8,17.8 575.5,9.2 574.2,9.2 572.2,14.8ZM611.0,48.5 613.0,45.9 613.5,48.0ZM582.4,45.5 584.6,38.9 583.5,38.9 581.9,43.3ZM579.1,35.8 581.9,32.6 580.0,32.1ZM594.8,51.0 596.5,48.0 594.2,48.5ZM646.5,6.6 650.6,4.4 649.2,7.6ZM656.1,27.9 660.2,27.5 658.9,29.8ZM547.5,16.8 549.7,14.8 548.6,18.3ZM569.5,21.7 572.2,20.3 571.1,23.2ZM671.2,31.2 674.0,29.8 672.6,33.0ZM1070.0,-7.1 1075.5,-9.9 1072.8,-4.8Z" fill="#a9cfdd"/><path d="M850.4,103.2 852.2,112.4 845.5,116.7 831.4,124.1 831.0,128.6M823.4,129.8 831.4,129.0M831.4,129.0 831.7,132.7 823.4,133.0 819.5,139.6 820.7,146.1 808.7,146.5M831.7,129.0 865.7,153.1M837.5,135.7 840.6,162.7 823.4,164.2M823.4,164.2 816.7,160.9 809.9,161.2M867.0,153.5 888.4,140.6M888.4,140.6 896.4,142.5 905.0,140.4M878.6,97.7 876.4,107.7 882.1,115.8M886.6,111.2 882.1,115.8M882.1,115.8 881.7,133.3 888.4,140.6M867.0,153.5 865.1,162.7 856.5,164.9M856.5,164.9 844.3,168.2 840.6,178.7M856.5,164.9 862.1,172.5 865.1,168.8M865.1,168.8 873.7,168.2 893.3,169.5M896.4,142.5 898.0,155.3 893.3,169.5M823.4,164.2 831.4,172.5 832.6,178.7 840.6,178.7M847.3,177.4 846.7,192.2M840.6,178.7 847.3,176.8 862.7,175.6M856.5,176.2 857.8,189.7M859.6,176.2 860.8,189.1M865.1,168.8 863.9,179.9 862.4,189.1M819.7,178.7 827.1,183.0 834.4,192.8M832.6,178.7 834.4,192.8M809.9,168.2 817.3,168.2M809.9,171.3 824.6,172.5M893.3,169.5 895.8,178.7 881.1,190.9M924.4,124.0 924.4,150.3M924.4,144.1 956.7,144.1M924.4,150.3 920.7,150.9M920.7,150.9 899.1,140.4 896.2,142.1M920.7,150.9 920.1,162.6 916.6,166.1 916.0,171.9 918.4,177.2 920.1,181.8M896.2,142.1 897.9,148.5 896.2,161.4M895.0,185.9 902.0,184.7 907.9,181.8 918.4,177.2M920.1,181.8 923.0,183.0 930.6,192.3M922.5,181.8 926.5,178.3 933.6,181.2 942.9,178.9 945.2,173.1 947.0,173.6 948.7,180.1M961.0,156.7 956.3,160.8 955.2,168.4 949.9,177.2 948.7,180.1M955.7,166.1 961.6,165.5 969.8,170.1 972.1,173.1M972.1,175.4 974.4,178.9 986.1,184.7 990.2,178.9M986.1,184.7 976.8,191.8 968.6,195.3M948.7,180.1 947.0,184.7 953.4,193.5M930.6,192.3 939.4,196.4 949.9,194.7 953.4,193.5M953.4,193.5 960.4,196.4 968.6,195.3M968.6,195.3 968.0,210.4M939.4,196.4 940.0,201.1 935.9,210.4 935.9,224.0M951.1,195.3 950.5,203.4 948.2,208.1M948.2,209.9 958.1,214.0 963.9,219.8M895.0,201.1 899.7,197.6 906.7,194.1 909.0,192.9 917.2,194.7 930.6,192.3M899.7,197.6 899.1,205.8 900.3,215.1 895.0,223.3M889.5,222.5 900.1,222.5 903.1,228.6 909.1,226.6 914.7,226.6 916.7,237.1 921.2,237.6 932.3,239.6 934.8,242.6 936.8,241.1M933.3,232.1 936.3,229.6 940.3,230.1 946.3,232.1M921.2,237.6 921.2,242.6 915.7,242.6 915.7,252.2 918.7,255.2M884.0,216.0 889.0,220.0 895.1,220.0 899.1,217.0 899.6,214.0M946.3,232.1 951.4,238.6 959.4,238.1 966.4,235.1M946.3,232.6 945.8,245.2 939.3,247.2M939.3,247.2 937.8,249.2 931.3,255.2 925.7,256.7M888.0,254.2 892.1,253.7 895.1,255.2 906.1,255.2 910.2,256.7 918.7,256.2 925.7,256.7M913.2,257.2 913.2,268.3 910.2,268.8 910.2,289.4M901.1,288.4 906.1,290.4 910.2,288.4M912.2,283.3 920.2,278.3 926.2,279.3 930.3,274.3 935.3,268.8M925.7,256.7 933.3,267.3 936.3,268.8M939.3,250.2 945.3,252.2 946.3,256.2 944.3,265.3 941.3,268.8 936.3,268.8M941.3,268.8 942.8,279.3M930.3,291.4 934.3,289.4 936.3,291.4 932.3,295.4 930.3,293.4 930.3,291.4M930.0,4.0 932.4,11.0 933.0,18.6 939.4,21.5 940.6,27.4 945.2,32.6 941.7,38.5 948.7,37.9 952.2,43.7 958.1,46.1 965.1,49.0 965.7,55.4 960.4,58.9 956.9,63.6M913.7,19.2 926.5,20.4 933.0,18.6M926.5,20.4 928.9,23.9 920.1,30.3M911.4,26.8 920.1,27.9 920.1,30.3M920.1,30.3 921.9,37.9 920.7,40.2M920.7,39.6 930.0,39.0 938.2,40.8 941.7,38.5M920.7,40.2 921.3,44.9 917.8,50.7M902.0,49.0 917.8,50.7M902.0,53.1 918.4,54.2M917.8,50.7 930.0,54.2 934.7,55.4 937.6,62.4M909.0,64.7 911.4,70.6 930.0,69.4 935.3,69.4M912.5,79.9 928.9,81.1 930.0,78.8M965.1,74.1 976.8,78.8 987.3,78.8M972.1,74.1 976.8,78.8 981.4,82.3M960.4,97.5 979.1,95.1M976.8,83.4 982.6,90.4M516.4,51.0 593.7,51.0 593.7,49.3 609.1,55.1 622.3,59.6 625.9,63.6 628.9,74.8 627.0,78.5 638.2,75.5 645.1,71.0 650.1,67.1 658.9,67.1 662.2,63.6 665.2,57.6 669.0,58.8 669.0,64.8 671.2,67.9M467.8,-3.2 473.2,-1.5 477.4,3.9 482.9,-0.4 489.8,7.1 498.0,19.8 496.4,25.6M533.5,111.4 540.1,110.8 550.2,115.3 558.0,115.3 562.6,113.7 568.1,120.7 572.0,122.6 576.6,120.1 581.9,127.3 588.2,132.2M602.0,165.7 602.0,163.7 603.3,161.1 606.9,161.1 606.9,156.2 610.5,156.2 612.7,154.2M610.2,161.7 609.9,166.0 607.7,168.0M609.9,166.0 614.0,169.1M614.3,169.9 616.8,167.7 621.8,164.6 626.7,164.3M619.8,175.3 625.3,175.8M627.2,183.1 628.6,179.5M641.3,186.1 642.9,182.3M656.7,173.0 656.1,178.4 656.4,183.9 662.7,186.7 669.9,188.9 669.0,193.6 670.4,200.5 671.5,202.7M690.5,182.5 688.6,185.3 687.5,190.9 690.2,191.7M698.5,189.5 696.0,200.8M707.0,190.3 705.6,199.7M671.5,202.7 679.5,200.5 681.1,195.3 687.8,193.6 690.2,191.7M691.0,202.1 700.1,200.8 705.6,199.7 710.6,199.4 713.6,194.4M638.2,202.1 642.6,204.9 648.7,206.3 653.4,209.6 663.0,217.6 664.6,209.0 663.5,201.3 671.5,202.7M634.7,215.4 638.2,219.8 641.0,215.4 648.7,206.3M663.0,217.6 655.0,220.6 652.3,226.4 655.3,230.9 661.4,236.4 664.4,236.4M664.4,236.4 675.6,233.1 682.2,240.9 689.1,244.3 690.0,251.2 695.5,251.4 697.1,256.9 695.5,261.6 684.2,268.6 678.7,270.4 670.7,270.4 666.3,263.3 664.4,254.9 665.5,248.6 666.6,240.7 664.4,236.4M664.4,254.9 661.9,257.2M670.7,270.4 667.4,277.0 666.6,283.2 663.5,294.1 662.5,302.2 661.4,312.2 658.9,326.2M684.2,268.6 696.0,278.6 705.4,278.9 707.5,283.8 702.0,286.9 697.1,293.2 695.5,300.6 694.9,305.5M697.1,293.2 701.8,295.4 708.6,300.9 708.9,304.5M695.5,261.6 696.3,268.3 702.0,268.9 706.2,274.3 705.4,278.9M850.5,73.3 855.5,75.9 860.2,76.6 864.3,77.0M862.4,42.0 867.0,46.8 871.5,48.9 873.1,48.9 878.0,51.0 876.4,56.8 872.3,62.4 874.8,63.6 873.6,66.7 876.1,71.7M831.0,78.5 837.6,78.9 836.5,84.7 836.2,89.4 835.1,95.6M864.9,40.7 871.5,42.4 872.0,43.3 872.3,38.9 874.8,36.7 875.3,32.1M894.5,29.3 895.6,35.3 896.8,42.4 888.8,45.5 893.5,51.8 891.2,57.2 883.3,57.2 876.4,56.8M874.8,63.6 878.9,61.2 884.4,60.8 889.6,58.8 893.2,61.2 899.8,60.0 902.5,55.1M896.8,42.4 900.3,43.7 907.2,48.9 917.6,50.6M893.5,51.8 896.8,51.0 902.0,52.7 907.2,48.9M902.5,55.1 907.8,56.0 916.3,53.5M893.2,65.2 898.7,62.4 901.1,61.2M899.8,60.0 903.1,63.6 907.2,63.6 911.3,62.8 913.8,61.6 916.3,53.5M911.3,62.8 914.9,67.9 917.6,70.2 924.2,72.1 930.0,70.6 934.1,72.1M899.0,66.3 907.8,67.1 908.9,70.2 909.1,74.0 906.4,76.6M917.6,70.2 916.8,77.4 918.5,81.1 927.5,79.6 932.5,78.5M910.5,86.9 913.0,82.5 918.5,81.1M927.5,79.6 927.3,83.3M908.6,77.8 912.1,78.9 916.8,77.4M887.1,4.4 889.9,-4.3 889.0,-12.9M931.7,-4.3 937.5,-9.9 942.1,-18.2M969.9,80.3 975.1,81.8 978.7,86.9 977.6,95.3 972.1,96.0 966.0,96.0 960.0,97.0 956.1,97.0 954.5,100.1M954.2,103.1 956.1,105.8 954.0,108.8 952.0,109.4M953.4,110.8 962.8,112.1 968.2,104.8 972.1,96.0M951.8,121.0 957.2,119.4 960.0,114.6 962.8,112.1M962.8,112.1 978.4,122.0 983.4,122.3 986.7,122.0M955.9,121.0 968.2,122.6 978.4,122.0M983.4,122.3 989.1,125.4M975.1,81.8 979.2,81.4 983.4,78.9 989.1,79.2M965.5,73.3 972.1,74.0 977.9,75.9 983.4,78.9M979.2,81.4 983.4,89.4 978.7,86.9M983.4,89.4 987.5,86.9 990.0,91.5M977.6,95.3 980.4,100.1 982.5,108.8 986.7,114.3 987.8,119.4M998.5,158.5 1001.5,159.7 1008.7,144.0 1007.3,141.9 998.5,141.3 995.8,136.5M973.2,160.3 983.4,158.0 990.2,153.9 998.5,152.8 1001.5,159.7M990.2,61.6 983.6,53.1 985.9,45.0 995.2,39.8 1006.8,44.2 1015.0,42.4 1024.1,43.3 1023.2,29.3 1034.8,26.0 1045.8,22.7 1057.3,31.2 1066.7,28.9 1070.0,35.8 1076.3,43.3 1084.6,42.4 1095.6,50.1M1097.0,50.1 1108.5,44.2 1125.0,38.5 1136.0,41.1 1149.2,45.5 1154.2,49.7 1169.0,45.9 1176.4,47.6M1176.4,47.6 1184.7,35.8 1188.0,32.1 1202.3,34.4 1206.4,47.6 1214.7,51.4 1225.9,53.9 1221.5,66.7 1216.6,67.5 1214.7,77.0M1097.0,50.1 1104.9,65.2 1117.6,70.2 1127.8,76.3 1144.2,80.0 1163.0,72.1 1170.1,65.6 1179.7,60.0 1185.0,59.2 1176.4,47.6M1095.6,50.1 1090.9,58.8 1082.4,66.0 1076.0,67.5 1076.3,77.0M1003.7,78.1 1009.2,81.1 1009.5,67.1 1016.7,64.8 1023.2,69.4 1026.0,72.9 1034.2,72.1 1037.0,75.2 1043.9,83.6 1050.5,77.4 1057.6,74.8 1061.8,75.5 1076.3,77.0M1003.7,95.3 1013.1,92.5 1021.6,97.7 1023.8,101.1 1032.9,98.7 1038.4,95.0 1042.5,96.3 1052.1,93.2 1061.5,95.6M1023.8,101.1 1022.7,105.5 1023.0,114.6 1025.5,116.3 1023.0,119.8 1027.4,121.3 1029.6,128.2 1024.9,134.4M1023.0,119.8 1037.8,119.8 1046.1,113.4 1048.8,107.8 1051.0,104.5 1052.4,98.4 1059.0,96.3M1043.0,138.9 1049.4,132.8 1050.8,126.4 1059.0,117.9 1060.7,110.8 1067.2,103.1M1069.5,101.5 1073.6,111.4 1078.2,118.8 1092.0,126.0 1098.0,126.0 1100.0,127.9 1108.5,126.7 1117.8,122.3 1123.1,125.1M1075.8,123.2 1086.5,127.6 1098.0,130.7M1100.0,144.0 1100.0,136.8 1097.8,133.4 1102.5,131.6 1109.3,135.0 1108.5,139.2 1110.2,146.0M1110.2,146.0 1112.1,140.1 1115.7,132.8 1117.3,129.1 1123.1,125.1M1123.1,125.1 1126.9,132.2 1123.6,138.3 1130.8,145.4 1135.7,142.8 1142.6,141.6 1146.7,141.3 1152.5,145.4M1130.8,148.7 1125.5,150.7 1123.3,154.2 1126.7,160.8 1128.0,167.7 1126.7,177.5M1130.8,148.7 1133.8,151.0 1133.2,156.2 1137.7,156.0 1143.7,160.3 1145.6,166.0 1138.8,166.0 1136.8,168.5 1137.7,172.5M1135.7,142.8 1142.6,149.8 1148.7,160.0 1151.1,165.4 1147.5,173.6 1142.9,177.2M1145.6,166.0 1151.1,165.4M1130.8,188.1 1136.3,188.9M1156.9,200.2 1163.5,202.1 1170.7,202.1 1174.5,195.0 1179.5,194.7M1243.2,213.2 1243.2,231.1M1197.3,86.2 1204.2,79.6 1208.0,78.5 1212.2,77.0 1214.7,77.0M1202.3,93.9 1208.6,90.8M1199.0,231.1 1199.5,229.7" fill="none" stroke="#a88aa6" stroke-opacity="0.75" stroke-width="0.75"/></g><use href="#wld" x="-990.0"/><use href="#wld" x="990.0"/><path d="M-2,-5 L-2.0,-30.2 L1.0,-28.8 L4.0,-27.4 L7.0,-25.9 L10.0,-24.3 L13.0,-22.6 L16.0,-20.9 L19.0,-19.1 L22.0,-17.3 L25.0,-15.4 L28.0,-13.4 L31.0,-11.3 L34.0,-9.1 L37.0,-6.9 L40.0,-4.6 L43.0,-2.2 L46.0,0.2 L49.0,2.8 L52.0,5.4 L55.0,8.1 L58.0,10.9 L61.0,13.8 L64.0,16.8 L67.0,19.9 L70.0,23.1 L73.0,26.4 L76.0,29.8 L79.0,33.3 L82.0,36.9 L85.0,40.6 L88.0,44.5 L91.0,48.5 L94.0,52.5 L97.0,56.7 L100.0,61.1 L103.0,65.5 L106.0,70.1 L109.0,74.9 L112.0,79.8 L115.0,84.8 L118.0,89.9 L121.0,95.2 L124.0,100.7 L127.0,106.3 L130.0,112.0 L133.0,117.9 L136.0,123.9 L139.0,130.1 L142.0,136.4 L145.0,142.9 L148.0,149.4 L151.0,156.1 L154.0,162.9 L157.0,169.7 L160.0,176.7 L163.0,183.7 L166.0,190.8 L169.0,197.9 L172.0,205.0 L175.0,212.2 L178.0,219.3 L181.0,226.4 L184.0,233.4 L187.0,240.4 L190.0,247.3 L193.0,254.1 L196.0,260.8 L199.0,267.4 L202.0,273.9 L205.0,280.2 L208.0,286.4 L211.0,292.5 L214.0,298.4 L217.0,304.2 L220.0,309.8 L223.0,315.3 L226.0,320.0 L229.0,320.0 L232.0,320.0 L235.0,320.0 L238.0,320.0 L241.0,320.0 L244.0,320.0 L247.0,320.0 L250.0,320.0 L253.0,320.0 L256.0,320.0 L259.0,320.0 L262.0,320.0 L265.0,320.0 L268.0,320.0 L271.0,320.0 L274.0,320.0 L277.0,320.0 L280.0,320.0 L283.0,320.0 L286.0,320.0 L289.0,320.0 L292.0,320.0 L295.0,320.0 L298.0,320.0 L301.0,320.0 L304.0,320.0 L307.0,320.0 L310.0,320.0 L313.0,320.0 L316.0,320.0 L319.0,320.0 L322.0,320.0 L325.0,320.0 L328.0,320.0 L331.0,320.0 L334.0,320.0 L337.0,320.0 L340.0,320.0 L343.0,320.0 L346.0,320.0 L349.0,320.0 L352.0,320.0 L355.0,320.0 L358.0,320.0 L361.0,320.0 L364.0,320.0 L367.0,320.0 L370.0,320.0 L373.0,320.0 L376.0,320.0 L379.0,320.0 L382.0,320.0 L385.0,320.0 L388.0,320.0 L391.0,320.0 L394.0,320.0 L397.0,320.0 L400.0,320.0 L403.0,320.0 L406.0,320.0 L409.0,320.0 L412.0,320.0 L415.0,320.0 L418.0,320.0 L421.0,320.0 L424.0,320.0 L427.0,320.0 L430.0,320.0 L433.0,320.0 L436.0,320.0 L439.0,320.0 L442.0,320.0 L445.0,320.0 L448.0,320.0 L451.0,320.0 L454.0,320.0 L457.0,320.0 L460.0,320.0 L463.0,320.0 L466.0,320.0 L469.0,320.0 L472.0,320.0 L475.0,320.0 L478.0,320.0 L481.0,320.0 L484.0,320.0 L487.0,320.0 L490.0,320.0 L493.0,320.0 L496.0,320.0 L499.0,320.0 L502.0,320.0 L505.0,320.0 L508.0,320.0 L511.0,320.0 L514.0,320.0 L517.0,320.0 L520.0,320.0 L523.0,320.0 L526.0,320.0 L529.0,320.0 L532.0,320.0 L535.0,320.0 L538.0,320.0 L541.0,320.0 L544.0,320.0 L547.0,320.0 L550.0,320.0 L553.0,320.0 L556.0,320.0 L559.0,320.0 L562.0,320.0 L565.0,320.0 L568.0,320.0 L571.0,320.0 L574.0,320.0 L577.0,320.0 L580.0,320.0 L583.0,320.0 L586.0,320.0 L589.0,320.0 L592.0,320.0 L595.0,320.0 L598.0,320.0 L601.0,320.0 L604.0,320.0 L607.0,320.0 L610.0,320.0 L613.0,320.0 L616.0,316.8 L619.0,311.3 L622.0,305.7 L625.0,300.0 L628.0,294.1 L631.0,288.1 L634.0,281.9 L637.0,275.6 L640.0,269.1 L643.0,262.6 L646.0,255.9 L649.0,249.1 L652.0,242.3 L655.0,235.3 L658.0,228.3 L661.0,221.2 L664.0,214.1 L667.0,207.0 L670.0,199.8 L673.0,192.7 L676.0,185.6 L679.0,178.6 L682.0,171.6 L685.0,164.7 L688.0,157.9 L691.0,151.2 L694.0,144.6 L697.0,138.1 L700.0,131.8 L703.0,125.6 L706.0,119.5 L709.0,113.6 L712.0,107.8 L715.0,102.2 L718.0,96.7 L721.0,91.3 L724.0,86.1 L727.0,81.1 L730.0,76.2 L733.0,71.4 L736.0,66.8 L739.0,62.3 L742.0,57.9 L745.0,53.6 L748.0,49.5 L751.0,45.5 L754.0,41.7 L757.0,37.9 L760.0,34.3 L763.0,30.7 L766.0,27.3 L769.0,24.0 L772.0,20.8 L775.0,17.6 L778.0,14.6 L781.0,11.7 L784.0,8.9 L787.0,6.1 L790.0,3.5 L793.0,0.9 L796.0,-1.6 L799.0,-4.0 L802.0,-6.3 L805.0,-8.6 L808.0,-10.7 L811.0,-12.8 L814.0,-14.8 L817.0,-16.8 L820.0,-18.6 L823.0,-20.4 L826.0,-22.2 L829.0,-23.8 L832.0,-25.4 L835.0,-27.0 L838.0,-28.5 L841.0,-29.9 L844.0,-31.2 L847.0,-32.5 L850.0,-33.7 L853.0,-34.9 L856.0,-36.0 L859.0,-37.0 L862.0,-38.0 L865.0,-38.9 L868.0,-39.8 L871.0,-40.6 L874.0,-41.4 L877.0,-42.1 L880.0,-42.7 L883.0,-43.3 L886.0,-43.9 L889.0,-44.3 L892.0,-44.8 L895.0,-45.1 L898.0,-45.5 L901.0,-45.7 L904.0,-46.0 L907.0,-46.1 L910.0,-46.2 L913.0,-46.3 L916.0,-46.3 L919.0,-46.3 L922.0,-46.2 L925.0,-46.0 L928.0,-45.8 L931.0,-45.5 L934.0,-45.2 L937.0,-44.9 L940.0,-44.5 L943.0,-44.0 L946.0,-43.5 L949.0,-42.9 L952.0,-42.2 L955.0,-41.6 L958.0,-40.8 L961.0,-40.0 L964.0,-39.2 L967.0,-38.3 L970.0,-37.3 L973.0,-36.3 L976.0,-35.2 L979.0,-34.0 L982.0,-32.8 L985.0,-31.5 L988.0,-30.2 L991.0,-28.8 L994.0,-27.4 L997.0,-25.9 L1000.0,-24.3 L1003.0,-22.6 L1006.0,-20.9 L1009.0,-19.1 L1012.0,-17.3 L1015.0,-15.4 L1018.0,-13.4 L1021.0,-11.3 L1024.0,-9.1 L1027.0,-6.9 L1030.0,-4.6 L1033.0,-2.2 L1036.0,0.2 L1039.0,2.8 L1042.0,5.4 L1045.0,8.1 L1048.0,10.9 L1051.0,13.8 L1054.0,16.8 L1057.0,19.9 L1060.0,23.1 L1063.0,26.4 L1066.0,29.8 L1069.0,33.3 L1072.0,36.9 L1075.0,40.6 L1078.0,44.5 L1081.0,48.5 L1084.0,52.5 L1087.0,56.7 L1090.0,61.1 L1093.0,65.5 L1096.0,70.1 L1099.0,74.9 L1102.0,79.8 L1105.0,84.8 L1108.0,89.9 L1111.0,95.2 L1114.0,100.7 L1117.0,106.3 L1120.0,112.0 L1123.0,117.9 L1126.0,123.9 L1129.0,130.1 L1132.0,136.4 L1135.0,142.9 L1138.0,149.4 L1141.0,156.1 L1144.0,162.9 L1147.0,169.7 L1150.0,176.7 L1153.0,183.7 L1156.0,190.8 L1159.0,197.9 L1162.0,205.0 L1165.0,212.2 L1168.0,219.3 L1171.0,226.4 L1174.0,233.4 L1177.0,240.4 L1180.0,247.3 L1183.0,254.1 L1186.0,260.8 L1189.0,267.4 L1192.0,273.9 L1195.0,280.2 L1198.0,286.4 L1201.0,292.5 L1204.0,298.4 L1207.0,304.2 L1210.0,309.8 L1213.0,315.3 L1216.0,320.0 L1219.0,320.0 L1222.0,320.0 L1225.0,320.0 L1228.0,320.0 L1231.0,320.0 L1234.0,320.0 L1237.0,320.0 L1240.0,320.0 L1243.0,320.0 L1246.0,320.0 L1249.0,320.0 L1252.0,320.0 L1255.0,320.0 L1258.0,320.0 L1261.0,320.0 L1264.0,320.0 L1267.0,320.0 L1270.0,320.0 L1273.0,320.0 L1276.0,320.0 L1279.0,320.0 L1282.0,320.0 L1285.0,320.0 L1288.0,320.0 L1291.0,320.0 L1294.0,320.0 L1297.0,320.0 L1300.0,320.0 L1303.0,320.0 L1306.0,320.0 L1309.0,320.0 L1312.0,320.0 L1315.0,320.0 L1318.0,320.0 L1321.0,320.0 L1324.0,320.0 L1327.0,320.0 L1330.0,320.0 L1333.0,320.0 L1336.0,320.0 L1339.0,320.0 L1342.0,320.0 L1345.0,320.0 L1348.0,320.0 L1351.0,320.0 L1354.0,320.0 L1357.0,320.0 L1360.0,320.0 L1363.0,320.0 L1366.0,320.0 L1369.0,320.0 L1372.0,320.0 L1375.0,320.0 L1378.0,320.0 L1381.0,320.0 L1384.0,320.0 L1387.0,320.0 L1390.0,320.0 L1393.0,320.0 L1396.0,320.0 L1399.0,320.0 L1402.0,320.0 L1405.0,320.0 L1408.0,320.0 L1411.0,320.0 L1414.0,320.0 L1417.0,320.0 L1420.0,320.0 L1423.0,320.0 L1426.0,320.0 L1429.0,320.0 L1432.0,320.0 L1435.0,320.0 L1438.0,320.0 L1441.0,320.0 L1444.0,320.0 L1447.0,320.0 L1450.0,320.0 L1453.0,320.0 L1456.0,320.0 L1457,-5Z" fill="#000" fill-opacity="0.1"/><path d="M662.9,171.9 660.0,169.6 657.0,167.4 654.0,165.1 651.1,162.9 648.0,160.6 645.0,158.4 641.9,156.1 638.8,153.9 635.7,151.7 632.6,149.5 629.4,147.3 626.2,145.1 622.9,143.0 619.7,140.8 616.3,138.7 613.0,136.6 609.6,134.5 606.2,132.4 602.7,130.4 599.2,128.3 595.7,126.3 592.1,124.3 588.4,122.4 584.8,120.4 581.0,118.5 577.3,116.7 573.5,114.8 569.6,113.1 565.7,111.3 561.8,109.6 557.8,107.9 553.7,106.3 549.6,104.8 545.5,103.2 541.3,101.8 537.1,100.4 532.8,99.0 528.5,97.8 524.2,96.5 519.8,95.4" stroke="#6c1a80" stroke-opacity="0.72" stroke-width="1.9" fill="none" stroke-linejoin="round"/><path d="M662.9,171.9 660.1,170.0 657.2,168.0 654.4,166.1 651.5,164.2 648.6,162.3 645.7,160.4 642.8,158.5 639.8,156.6 636.8,154.7 633.8,152.9 630.8,151.0 627.8,149.2 624.7,147.3 621.6,145.5 618.5,143.7 615.4,141.9 612.2,140.2 609.0,138.4 605.7,136.7 602.5,135.0 599.2,133.3 595.9,131.6 592.5,130.0 589.2,128.4 585.7,126.8 582.3,125.2 578.8,123.7 575.3,122.2 571.8,120.7 568.2,119.3 564.6,117.8 560.9,116.5 557.3,115.1 553.6,113.9 549.8,112.6 546.1,111.4 542.3,110.2 538.4,109.1 534.6,108.0 530.7,107.0" stroke="#6c1a80" stroke-opacity="0.72" stroke-width="1.9" fill="none" stroke-linejoin="round"/><path d="M662.9,171.9 660.6,169.6 658.3,167.2 656.0,164.9 653.7,162.5 651.3,160.2 648.9,157.9 646.5,155.5 644.1,153.2 641.7,150.8 639.2,148.5 636.7,146.2 634.2,143.8 631.7,141.5 629.1,139.2 626.5,136.9 623.9,134.5 621.2,132.2 618.5,129.9 615.7,127.6 613.0,125.3 610.1,123.0 607.3,120.7 604.4,118.5 601.5,116.2 598.5,114.0 595.4,111.7 592.4,109.5 589.2,107.3 586.1,105.1 582.9,102.9 579.6,100.8 576.3,98.7 572.9,96.6 569.5,94.5 566.0,92.5 562.4,90.5 558.8,88.5 555.2,86.5 551.5,84.7 547.7,82.8" stroke="#6c1a80" stroke-opacity="0.72" stroke-width="1.9" fill="none" stroke-linejoin="round"/><path d="M662.9,171.9 661.5,169.9 660.1,168.0 658.7,166.0 657.3,164.0 655.9,162.1 654.5,160.1 653.0,158.1 651.6,156.1 650.1,154.1 648.7,152.1 647.2,150.1 645.7,148.1 644.2,146.1 642.7,144.1 641.1,142.1 639.6,140.1 638.0,138.1 636.4,136.1 634.8,134.0 633.2,132.0 631.5,130.0 629.9,127.9 628.2,125.9 626.5,123.9 624.8,121.8 623.1,119.7 621.3,117.7 619.5,115.6 617.7,113.6 615.9,111.5 614.0,109.4 612.1,107.3 610.2,105.3 608.2,103.2 606.3,101.1 604.3,99.0 602.2,96.9 600.1,94.9 598.0,92.8 595.9,90.7" stroke="#6c1a80" stroke-opacity="0.72" stroke-width="1.9" fill="none" stroke-linejoin="round"/><path d="M662.9,171.9 L612.9,102.7" stroke="#6c1a80" stroke-opacity="0.72" stroke-width="1.9" fill="none" stroke-linejoin="round"/><path d="M662.9,171.9 662.4,169.6 661.9,167.2 661.4,164.8 660.9,162.5 660.4,160.1 659.9,157.7 659.3,155.3 658.8,152.9 658.3,150.5 657.7,148.0 657.2,145.6 656.7,143.1 656.1,140.6 655.5,138.2 655.0,135.6 654.4,133.1 653.8,130.6 653.2,128.0 652.6,125.5 652.0,122.9 651.4,120.3 650.7,117.6 650.1,115.0 649.4,112.3 648.8,109.6 648.1,106.9 647.4,104.1 646.7,101.4 646.0,98.6 645.2,95.7 644.5,92.9 643.7,90.0 642.9,87.1 642.1,84.1 641.3,81.2 640.4,78.1 639.6,75.1 638.7,72.0 637.7,68.9 636.8,65.7" stroke="#6c1a80" stroke-opacity="0.72" stroke-width="1.9" fill="none" stroke-linejoin="round"/><path d="M662.9,171.9 662.5,169.9 662.2,167.9 661.8,165.8 661.4,163.8 661.0,161.8 660.7,159.7 660.3,157.6 659.9,155.6 659.5,153.5 659.1,151.4 658.7,149.3 658.3,147.2 657.9,145.1 657.5,143.0 657.1,140.9 656.7,138.7 656.3,136.6 655.9,134.4 655.4,132.2 655.0,130.1 654.6,127.9 654.1,125.6 653.7,123.4 653.2,121.2 652.7,118.9 652.3,116.6 651.8,114.3 651.3,112.0 650.8,109.7 650.3,107.4 649.8,105.0 649.3,102.6 648.8,100.2 648.2,97.8 647.7,95.4 647.1,92.9 646.6,90.4 646.0,87.9 645.4,85.4 644.8,82.8" stroke="#6c1a80" stroke-opacity="0.72" stroke-width="1.9" fill="none" stroke-linejoin="round"/><path d="M662.9,171.9 662.8,169.8 662.7,167.6 662.6,165.5 662.6,163.3 662.5,161.1 662.4,158.9 662.3,156.7 662.2,154.6 662.1,152.3 662.0,150.1 661.9,147.9 661.8,145.7 661.7,143.4 661.6,141.1 661.6,138.9 661.5,136.6 661.4,134.3 661.3,132.0 661.2,129.6 661.1,127.3 661.0,124.9 660.8,122.5 660.7,120.1 660.6,117.7 660.5,115.3 660.4,112.8 660.3,110.3 660.2,107.9 660.1,105.3 659.9,102.8 659.8,100.2 659.7,97.6 659.6,95.0 659.4,92.4 659.3,89.7 659.2,87.0 659.0,84.3 658.9,81.5 658.7,78.7 658.6,75.9" stroke="#6c1a80" stroke-opacity="0.72" stroke-width="1.9" fill="none" stroke-linejoin="round"/><path d="M662.9,171.9 664.3,174.4 665.8,177.0 667.2,179.5 668.6,182.0 670.0,184.6 671.5,187.1 672.9,189.6 674.3,192.1 675.6,194.6 677.0,197.1 678.4,199.7 679.8,202.2 681.2,204.7 682.6,207.2 684.0,209.7 685.4,212.2 686.7,214.7 688.1,217.2 689.5,219.7 690.9,222.2 692.3,224.8 693.7,227.3 695.2,229.8 696.6,232.3 698.0,234.9 699.4,237.4 700.9,239.9 702.3,242.5 703.8,245.0 705.3,247.6 706.8,250.2 708.3,252.8 709.8,255.3 711.3,257.9 712.9,260.5 714.4,263.2 716.0,265.8 717.6,268.4 719.3,271.0 720.9,273.7" stroke="#6c1a80" stroke-opacity="0.72" stroke-width="1.9" fill="none" stroke-linejoin="round"/><path d="M662.9,171.9 666.3,169.4 669.7,166.8 673.1,164.3 676.5,161.8 680.0,159.3 683.5,156.8 687.1,154.4 690.6,151.9 694.3,149.5 697.9,147.0 701.6,144.6 705.3,142.2 709.1,139.9 713.0,137.5 716.8,135.2 720.7,132.9 724.7,130.6 728.7,128.4 732.8,126.2 736.9,124.0 741.1,121.8 745.4,119.8 749.7,117.7 754.0,115.7 758.4,113.8 762.9,111.9 767.4,110.0 772.0,108.2 776.6,106.5 781.3,104.9 786.0,103.3 790.8,101.8 795.7,100.3 800.6,99.0 805.5,97.7 810.5,96.6 815.6,95.5 820.6,94.5 825.8,93.6 830.9,92.8" stroke="#6c1a80" stroke-opacity="0.72" stroke-width="1.9" fill="none" stroke-linejoin="round"/><path d="M662.9,171.9 666.5,168.1 670.2,164.4 674.0,160.6 677.7,156.8 681.6,153.1 685.5,149.3 689.4,145.5 693.4,141.8 697.5,138.0 701.7,134.3 706.0,130.6 710.4,126.8 714.8,123.1 719.4,119.4 724.0,115.8 728.8,112.2 733.7,108.6 738.7,105.0 743.9,101.5 749.2,98.1 754.6,94.7 760.1,91.4 765.8,88.1 771.7,85.0 777.7,82.0 783.9,79.1 790.2,76.3 796.6,73.6 803.2,71.2 810.0,68.8 816.8,66.7 823.8,64.8 831.0,63.1 838.2,61.6 845.5,60.3 852.9,59.3 860.3,58.5 867.8,58.0 875.4,57.8 882.9,57.8" stroke="#6c1a80" stroke-opacity="0.72" stroke-width="1.9" fill="none" stroke-linejoin="round"/><path d="M830.9,92.8 L902.8,64.8" stroke="#6c1a80" stroke-opacity="0.72" stroke-width="1.9" fill="none" stroke-linejoin="round"/><path d="M720.9,273.7 723.9,268.0 726.9,262.3 729.7,256.7 732.5,251.2 735.3,245.6 738.0,240.2 740.6,234.7 743.3,229.3 745.9,223.9 748.4,218.5 751.0,213.1 753.6,207.7 756.1,202.4 758.7,197.0 761.3,191.6 763.9,186.2 766.5,180.8 769.1,175.3 771.8,169.9 774.5,164.4 777.3,158.9 780.1,153.3 783.0,147.7 785.9,142.0 789.0,136.2 792.1,130.4 795.4,124.6 798.7,118.6 802.2,112.6 805.9,106.5 809.7,100.4 813.7,94.1 817.9,87.7 822.3,81.3 826.9,74.8 831.8,68.1 837.1,61.4 842.6,54.6 848.6,47.8 854.9,40.9" stroke="#6c1a80" stroke-opacity="0.72" stroke-width="1.9" fill="none" stroke-linejoin="round"/><path d="M830.9,92.8 L854.9,40.9" stroke="#6c1a80" stroke-opacity="0.72" stroke-width="1.9" fill="none" stroke-linejoin="round"/><path d="M854.9,40.9 L839.7,26.8" stroke="#6c1a80" stroke-opacity="0.72" stroke-width="1.9" fill="none" stroke-linejoin="round"/><path d="M854.9,40.9 L866.8,38.5" stroke="#6c1a80" stroke-opacity="0.72" stroke-width="1.9" fill="none" stroke-linejoin="round"/><path d="M866.8,43.0 L899.0,48.8" stroke="#6c1a80" stroke-opacity="0.72" stroke-width="1.9" fill="none" stroke-linejoin="round"/><path d="M854.9,40.9 L899.0,48.8" stroke="#6c1a80" stroke-opacity="0.72" stroke-width="1.9" fill="none" stroke-linejoin="round"/><path d="M854.9,40.9 L919.7,76.8" stroke="#6c1a80" stroke-opacity="0.72" stroke-width="1.9" fill="none" stroke-linejoin="round"/><path d="M854.9,40.9 L930.8,76.8" stroke="#6c1a80" stroke-opacity="0.72" stroke-width="1.9" fill="none" stroke-linejoin="round"/><path d="M866.8,43.0 L930.8,76.8" stroke="#6c1a80" stroke-opacity="0.72" stroke-width="1.9" fill="none" stroke-linejoin="round"/><path d="M854.9,40.9 L902.8,64.8" stroke="#6c1a80" stroke-opacity="0.72" stroke-width="1.9" fill="none" stroke-linejoin="round"/><path d="M902.8,64.8 L919.7,76.8" stroke="#6c1a80" stroke-opacity="0.72" stroke-width="1.9" fill="none" stroke-linejoin="round"/><path d="M902.8,64.8 L930.8,76.8" stroke="#6c1a80" stroke-opacity="0.72" stroke-width="1.9" fill="none" stroke-linejoin="round"/><path d="M866.8,43.0 L919.7,76.8" stroke="#6c1a80" stroke-opacity="0.72" stroke-width="1.9" fill="none" stroke-linejoin="round"/><circle cx="519.8" cy="95.4" r="2.8" fill="#e8301e"/><circle cx="530.7" cy="107.0" r="2.8" fill="#e8301e"/><circle cx="547.7" cy="82.8" r="2.8" fill="#e8301e"/><circle cx="595.9" cy="90.7" r="2.8" fill="#e8301e"/><circle cx="612.9" cy="102.7" r="2.8" fill="#e8301e"/><circle cx="636.8" cy="65.7" r="2.8" fill="#e8301e"/><circle cx="644.8" cy="82.8" r="2.8" fill="#e8301e"/><circle cx="658.6" cy="75.9" r="2.8" fill="#e8301e"/><circle cx="720.9" cy="273.7" r="2.8" fill="#e8301e"/><circle cx="839.7" cy="26.8" r="2.8" fill="#e8301e"/><circle cx="852.6" cy="40.9" r="2.8" fill="#e8301e"/><circle cx="866.8" cy="38.5" r="2.8" fill="#e8301e"/><circle cx="899.0" cy="48.8" r="2.8" fill="#e8301e"/><circle cx="882.9" cy="57.8" r="2.8" fill="#e8301e"/><circle cx="919.7" cy="76.8" r="2.8" fill="#e8301e"/><circle cx="930.8" cy="76.8" r="2.8" fill="#e8301e"/><circle cx="830.9" cy="92.8" r="2.8" fill="#e8301e"/><circle cx="662.9" cy="171.9" r="3.1" fill="#0010ff"/><circle cx="854.9" cy="40.9" r="3.1" fill="#0010ff"/><circle cx="866.8" cy="43.0" r="3.1" fill="#0010ff"/><circle cx="902.8" cy="64.8" r="3.1" fill="#0010ff"/></svg></div>
<div style="left:30px;top:301px;width:34px;height:64px;background:#fff;border:2px solid rgba(0,0,0,0.25);border-radius:4px;box-sizing:border-box;background-clip:padding-box"></div>
<div style="left:32px;top:333px;width:30px;height:1px;background:#ccc"></div>
<div style="left:41px;top:318.9px;width:13px;height:2.3px;background:#000"></div>
<div style="left:46.2px;top:313.8px;width:2.6px;height:12.2px;background:#000"></div>
<div style="left:41px;top:349.9px;width:13px;height:2.5px;background:#000"></div>
<div style="left:1245px;top:360px;width:227px;height:16px;background:rgba(255,255,255,0.8)"></div>
<svg style="left:1250px;top:364px" width="12" height="8"><rect width="12" height="4" fill="#4C7BE1"/><rect y="4" width="12" height="4" fill="#FFD500"/></svg>
<span style="left:1265.1px;top:363.29px;font-size:11px;font-weight:700;color:#2a74ae;">Leaflet</span>
<span style="left:1305px;top:363.29px;font-size:11px;font-weight:400;color:#333;">|</span>
<span style="left:1309.5px;top:363.29px;font-size:11px;font-weight:400;color:#333;">©</span>
<span style="left:1321.8px;top:363.29px;font-size:11px;font-weight:700;color:#2a74ae;">OpenStreetMap</span>
<span style="left:1407.4px;top:363.03px;font-size:11.3px;font-weight:400;color:#333;">contributors</span>
<div style="left:226.2px;top:390px;width:33.80000000000001px;height:10px;background:#a3a3a3"></div>
<span style="left:243.1px;transform:translateX(-50%);top:405.39px;font-size:11px;font-weight:400;color:#000;">630m</span>
<svg style="left:237.1px;top:426.0px" width="12" height="12" viewBox="0 0 12 12"><rect x="0.6" y="0.6" width="10.8" height="10.8" rx="3" fill="#fff" stroke="#7a7a7a" stroke-width="1.2"/></svg>
<div style="left:260.0px;top:390px;width:33.89999999999998px;height:10px;background:#fadb3f"></div>
<span style="left:276.95px;transform:translateX(-50%);top:405.39px;font-size:11px;font-weight:400;color:#000;">160m</span>
<svg style="left:270.95px;top:426.0px" width="12" height="12" viewBox="0 0 12 12"><rect x="0.6" y="0.6" width="10.8" height="10.8" rx="3" fill="#fff" stroke="#7a7a7a" stroke-width="1.2"/></svg>
<div style="left:293.9px;top:390px;width:28.0px;height:10px;background:#1a3511"></div>
<span style="left:307.9px;transform:translateX(-50%);top:405.39px;font-size:11px;font-weight:400;color:#000;">80m</span>
<svg style="left:301.9px;top:426.0px" width="12" height="12" viewBox="0 0 12 12"><rect x="0.6" y="0.6" width="10.8" height="10.8" rx="3" fill="#fff" stroke="#7a7a7a" stroke-width="1.2"/></svg>
<div style="left:321.9px;top:390px;width:27.900000000000034px;height:10px;background:#727272"></div>
<span style="left:335.85px;transform:translateX(-50%);top:405.39px;font-size:11px;font-weight:400;color:#000;">60m</span>
<svg style="left:329.85px;top:426.0px" width="12" height="12" viewBox="0 0 12 12"><rect x="0.6" y="0.6" width="10.8" height="10.8" rx="3" fill="#fff" stroke="#7a7a7a" stroke-width="1.2"/></svg>
<div style="left:349.8px;top:390px;width:28.0px;height:10px;background:#f4a131"></div>
<span style="left:363.8px;transform:translateX(-50%);top:405.39px;font-size:11px;font-weight:400;color:#000;">40m</span>
<svg style="left:357.8px;top:426.0px" width="12" height="12" viewBox="0 0 12 12"><rect x="0.6" y="0.6" width="10.8" height="10.8" rx="3" fill="#fff" stroke="#7a7a7a" stroke-width="1.2"/></svg>
<div style="left:377.8px;top:390px;width:27.30000000000001px;height:10px;background:#e8331f"></div>
<span style="left:391.45000000000005px;transform:translateX(-50%);top:405.39px;font-size:11px;font-weight:400;color:#000;">30m</span>
<svg style="left:385.45000000000005px;top:426.0px" width="12" height="12" viewBox="0 0 12 12"><rect x="0.6" y="0.6" width="10.8" height="10.8" rx="3" fill="#fff" stroke="#7a7a7a" stroke-width="1.2"/></svg>
<div style="left:405.1px;top:390px;width:28.0px;height:10px;background:#6c1c7c"></div>
<span style="left:419.1px;transform:translateX(-50%);top:405.39px;font-size:11px;font-weight:400;color:#000;">20m</span>
<svg style="left:413.1px;top:426.0px" width="12" height="12" viewBox="0 0 12 12"><rect x="0" y="0" width="12" height="12" rx="3.8" fill="#2c6ff6"/><path d="M2.9 6.4 L5.1 8.7 L9.2 3.3" stroke="#fff" stroke-width="1.5" fill="none" stroke-linecap="round" stroke-linejoin="round"/></svg>
<div style="left:433.1px;top:390px;width:27.899999999999977px;height:10px;background:#0a10fa"></div>
<span style="left:447.05px;transform:translateX(-50%);top:405.39px;font-size:11px;font-weight:400;color:#000;">17m</span>
<svg style="left:441.05px;top:426.0px" width="12" height="12" viewBox="0 0 12 12"><rect x="0.6" y="0.6" width="10.8" height="10.8" rx="3" fill="#fff" stroke="#7a7a7a" stroke-width="1.2"/></svg>
<div style="left:461.0px;top:390px;width:27.899999999999977px;height:10px;background:#3d3d3d"></div>
<span style="left:474.95px;transform:translateX(-50%);top:405.39px;font-size:11px;font-weight:400;color:#000;">15m</span>
<svg style="left:468.95px;top:426.0px" width="12" height="12" viewBox="0 0 12 12"><rect x="0.6" y="0.6" width="10.8" height="10.8" rx="3" fill="#fff" stroke="#7a7a7a" stroke-width="1.2"/></svg>
<div style="left:488.9px;top:390px;width:28.0px;height:10px;background:#5cf9f9"></div>
<span style="left:502.9px;transform:translateX(-50%);top:405.39px;font-size:11px;font-weight:400;color:#000;">12m</span>
<svg style="left:496.9px;top:426.0px" width="12" height="12" viewBox="0 0 12 12"><rect x="0.6" y="0.6" width="10.8" height="10.8" rx="3" fill="#fff" stroke="#7a7a7a" stroke-width="1.2"/></svg>
<div style="left:516.9px;top:390px;width:27.300000000000068px;height:10px;background:#e93bf0"></div>
<span style="left:530.55px;transform:translateX(-50%);top:405.39px;font-size:11px;font-weight:400;color:#000;">10m</span>
<svg style="left:524.55px;top:426.0px" width="12" height="12" viewBox="0 0 12 12"><rect x="0.6" y="0.6" width="10.8" height="10.8" rx="3" fill="#fff" stroke="#7a7a7a" stroke-width="1.2"/></svg>
<div style="left:544.2px;top:390px;width:21.399999999999977px;height:10px;background:#f4b9c1"></div>
<span style="left:554.9000000000001px;transform:translateX(-50%);top:405.39px;font-size:11px;font-weight:400;color:#000;">6m</span>
<svg style="left:548.9000000000001px;top:426.0px" width="12" height="12" viewBox="0 0 12 12"><rect x="0.6" y="0.6" width="10.8" height="10.8" rx="3" fill="#fff" stroke="#7a7a7a" stroke-width="1.2"/></svg>
<div style="left:565.6px;top:390px;width:22.299999999999955px;height:10px;background:#9274f2"></div>
<span style="left:576.75px;transform:translateX(-50%);top:405.39px;font-size:11px;font-weight:400;color:#000;">4m</span>
<svg style="left:570.75px;top:426.0px" width="12" height="12" viewBox="0 0 12 12"><rect x="0.6" y="0.6" width="10.8" height="10.8" rx="3" fill="#fff" stroke="#7a7a7a" stroke-width="1.2"/></svg>
<div style="left:587.9px;top:390px;width:21.700000000000045px;height:10px;background:#9bf27f"></div>
<span style="left:598.75px;transform:translateX(-50%);top:405.39px;font-size:11px;font-weight:400;color:#000;">2m</span>
<svg style="left:592.75px;top:426.0px" width="12" height="12" viewBox="0 0 12 12"><rect x="0.6" y="0.6" width="10.8" height="10.8" rx="3" fill="#fff" stroke="#7a7a7a" stroke-width="1.2"/></svg>
<span style="left:371px;transform:translateX(-50%);top:451.59px;font-size:11px;font-weight:400;color:#000;">cw</span>
<svg style="left:365.0px;top:473.0px" width="12" height="12" viewBox="0 0 12 12"><rect x="0.6" y="0.6" width="10.8" height="10.8" rx="3" fill="#fff" stroke="#7a7a7a" stroke-width="1.2"/></svg>
<span style="left:392.7px;transform:translateX(-50%);top:451.59px;font-size:11px;font-weight:400;color:#000;">rtty</span>
<svg style="left:386.7px;top:473.0px" width="12" height="12" viewBox="0 0 12 12"><rect x="0" y="0" width="12" height="12" rx="3.8" fill="#2c6ff6"/><path d="M2.9 6.4 L5.1 8.7 L9.2 3.3" stroke="#fff" stroke-width="1.5" fill="none" stroke-linecap="round" stroke-linejoin="round"/></svg>
<span style="left:421.6px;transform:translateX(-50%);top:451.59px;font-size:11px;font-weight:400;color:#000;">psk31</span>
<svg style="left:415.6px;top:473.0px" width="12" height="12" viewBox="0 0 12 12"><rect x="0.6" y="0.6" width="10.8" height="10.8" rx="3" fill="#fff" stroke="#7a7a7a" stroke-width="1.2"/></svg>
<span style="left:457.6px;transform:translateX(-50%);top:451.59px;font-size:11px;font-weight:400;color:#000;">psk63</span>
<svg style="left:451.6px;top:473.0px" width="12" height="12" viewBox="0 0 12 12"><rect x="0.6" y="0.6" width="10.8" height="10.8" rx="3" fill="#fff" stroke="#7a7a7a" stroke-width="1.2"/></svg>
<svg style="left:313.8px;top:494.0px" width="12" height="12" viewBox="0 0 12 12"><rect x="0" y="0" width="12" height="12" rx="3.8" fill="#2c6ff6"/><path d="M2.9 6.4 L5.1 8.7 L9.2 3.3" stroke="#fff" stroke-width="1.5" fill="none" stroke-linecap="round" stroke-linejoin="round"/></svg>
<span style="left:330.8px;top:494.99px;font-size:11px;font-weight:400;color:#000;">CQ</span>
<svg style="left:353.0px;top:494.0px" width="12" height="12" viewBox="0 0 12 12"><rect x="0.6" y="0.6" width="10.8" height="10.8" rx="3" fill="#fff" stroke="#7a7a7a" stroke-width="1.2"/></svg>
<span style="left:369.4px;top:494.99px;font-size:11px;font-weight:400;color:#000;">DX</span>
<svg style="left:390.8px;top:494.0px" width="12" height="12" viewBox="0 0 12 12"><rect x="0.6" y="0.6" width="10.8" height="10.8" rx="3" fill="#fff" stroke="#7a7a7a" stroke-width="1.2"/></svg>
<span style="left:407.2px;top:494.99px;font-size:11px;font-weight:400;color:#000;">BCN</span>
<svg style="left:436.3px;top:494.0px" width="12" height="12" viewBox="0 0 12 12"><rect x="0.6" y="0.6" width="10.8" height="10.8" rx="3" fill="#fff" stroke="#7a7a7a" stroke-width="1.2"/></svg>
<span style="left:452.7px;top:494.99px;font-size:11px;font-weight:400;color:#000;">/B</span>
<svg style="left:469.0px;top:494.0px" width="12" height="12" viewBox="0 0 12 12"><rect x="0.6" y="0.6" width="10.8" height="10.8" rx="3" fill="#fff" stroke="#7a7a7a" stroke-width="1.2"/></svg>
<span style="left:486px;top:494.99px;font-size:11px;font-weight:400;color:#000;">NCDXF</span>
<span style="left:921.5px;transform:translateX(-50%);top:391.49px;font-size:11px;font-weight:400;color:#000;">Consider supporting the RBN!!!</span>
<div style="left:875px;top:404px;width:92px;height:26px;border-radius:13px;background:#f7be45;box-shadow:inset 0 0 0 1px #e6a92e"></div>
<span style="left:921.5px;transform:translateX(-50%);top:410.43px;font-size:14.5px;font-weight:700;color:#111;letter-spacing:0.2px">Donate</span>
<div style="left:848.2px;top:437.3px;width:21.699999999999932px;height:13.4px;background:#fff;border:1px solid #bbb;box-sizing:border-box"></div>
<div style="left:873.2px;top:437.3px;width:20.899999999999977px;height:13.4px;background:#000;border:1px solid #bbb;box-sizing:border-box"></div>
<div style="left:898.1px;top:437.3px;width:21.699999999999932px;height:13.4px;background:#000;border:1px solid #bbb;box-sizing:border-box"></div>
<div style="left:923px;top:437.3px;width:22px;height:13.4px;background:#2e6fd6;border:1px solid #bbb;box-sizing:border-box"></div>
<div style="left:948.6px;top:437.3px;width:22.299999999999955px;height:13.4px;background:#fff;border:1px solid #bbb;box-sizing:border-box"></div>
<div style="left:974.2px;top:437.3px;width:20.59999999999991px;height:13.4px;background:#fff;border:1px solid #bbb;box-sizing:border-box"></div>
<svg style="left:848px;top:437px" width="150" height="14"><text x="11" y="10.6" text-anchor="middle" font-size="9" font-weight="700" fill="#1a1f71" font-family="Liberation Sans" textLength="15" lengthAdjust="spacingAndGlyphs">VISA</text><circle cx="33" cy="5.6" r="3.9" fill="#e8261c"/><circle cx="38.5" cy="5.6" r="3.9" fill="#f59e1a" fill-opacity="0.92"/><rect x="30" y="10.8" width="11" height="1" fill="#666"/><circle cx="57.5" cy="5.6" r="3.9" fill="#e8261c"/><circle cx="63" cy="5.6" r="3.9" fill="#3a8fde" fill-opacity="0.92"/><rect x="55" y="10.8" width="11" height="1" fill="#666"/><rect x="77" y="3" width="19" height="3" fill="#9cc4f5" opacity="0.8"/><rect x="78" y="7" width="17" height="3" fill="#9cc4f5" opacity="0.7"/><rect x="104" y="5.5" width="7" height="1.6" fill="#444"/><circle cx="113.5" cy="6.3" r="1.4" fill="#f08a24"/><rect x="116" y="5.5" width="6" height="1.6" fill="#444"/><path d="M110 13 L122 9 L122 13 Z" fill="#f08a24"/><path d="M128 2 L134 2 L132 13 L126 13 Z" fill="#d8232a"/><path d="M134 2 L140 2 L138 13 L132 13 Z" fill="#1d3f7a"/><path d="M140 2 L146 2 L144 13 L138 13 Z" fill="#0b7a6e"/><rect x="133" y="6" width="9" height="3" fill="#fff" opacity="0.5"/></svg>
<span style="left:1091.4px;top:391.69px;font-size:11px;font-weight:400;color:#000;">Max rows:</span>
<div style="left:1147px;top:391.4px;width:50.6px;height:17px;background:#e4e4e4;border-radius:5px"></div>
<span style="left:1154.3px;top:394.34px;font-size:12px;font-weight:400;color:#222;">25</span>
<svg style="left:1182px;top:393px" width="10" height="13"><path d="M2.5 5 L5 2.5 L7.5 5 M2.5 8 L5 10.5 L7.5 8" stroke="#333" stroke-width="1.3" fill="none"/></svg>
<span style="left:1211.6px;top:391.69px;font-size:11px;font-weight:400;color:#000;">Max age:</span>
<div style="left:1261.6px;top:388.6px;width:28px;height:17.2px;background:#fff;border:1px solid #ddd;border-radius:4px;box-sizing:border-box"></div>
<span style="left:1267px;top:391.84px;font-size:12px;font-weight:400;color:#000;">10</span>
<div style="left:1294.3px;top:388px;width:73.5px;height:17.7px;background:#e4e4e4;border-radius:5px"></div>
<span style="left:1302.5px;top:391.34px;font-size:12px;font-weight:400;color:#222;">Minutes</span>
<svg style="left:1351px;top:390px" width="10" height="13"><path d="M2.5 5 L5 2.5 L7.5 5 M2.5 8 L5 10.5 L7.5 8" stroke="#333" stroke-width="1.3" fill="none"/></svg>
<div style="left:1111px;top:415px;width:258.2px;height:14.2px;background:#fbf73c"></div>
<span style="right:111.5px;top:416.77px;font-size:11.5px;font-weight:400;color:#000;">New spots: 3</span>
<svg style="left:1166.9px;top:436.7px" width="11" height="11" viewBox="0 0 12 12"><rect x="0.6" y="0.6" width="10.8" height="10.8" rx="3" fill="#fff" stroke="#7a7a7a" stroke-width="1.2"/></svg>
<span style="left:1180.5px;top:436.77px;font-size:11.5px;font-weight:400;color:#000;">Show Spotters</span>
<div style="left:1261px;top:433.2px;width:106.8px;height:17.6px;background:#e3e3e3;border-radius:5px"></div>
<span style="left:1314.4px;transform:translateX(-50%);top:435.55px;font-size:12.7px;font-weight:400;color:#222;">Advanced Mode</span>
<span style="left:1189.5px;top:465.43px;font-size:11.3px;font-weight:400;color:#000;">CW Speed:</span>
<span style="left:1256.2px;top:465.43px;font-size:11.3px;font-weight:400;color:#000;">Min</span>
<div style="left:1277.8px;top:462.4px;width:27.9px;height:17.1px;background:#fff;border:1px solid #ddd;border-radius:4px;box-sizing:border-box"></div>
<span style="left:1284px;top:466.19px;font-size:11px;font-weight:400;color:#aaa;">all</span>
<span style="left:1315.7px;top:465.43px;font-size:11.3px;font-weight:400;color:#000;">Max</span>
<div style="left:1340.3px;top:462.4px;width:28.3px;height:17.1px;background:#fff;border:1px solid #ddd;border-radius:4px;box-sizing:border-box"></div>
<span style="left:1346.5px;top:466.19px;font-size:11px;font-weight:400;color:#aaa;">all</span>
<span style="right:111.40000000000009px;top:486.80px;font-size:11.1px;font-weight:700;color:#1034c6;">Copy URL to Clipboard</span>
<div style="left:1379px;top:382px;width:2px;height:126px;background:#7a7a7a"></div>
<span style="left:1390.8px;top:393.51px;font-size:9.2px;font-weight:400;color:#000;">Show Elements:</span>
<div style="left:1390px;top:403px;width:80.5px;height:1px;background:#888"></div>
<svg style="left:1390.8px;top:405.7px" width="8" height="8" viewBox="0 0 12 12"><rect x="0" y="0" width="12" height="12" rx="5" fill="#2c6ff6"/><path d="M2.9 6.4 L5.1 8.7 L9.2 3.3" stroke="#fff" stroke-width="1.5" fill="none" stroke-linecap="round" stroke-linejoin="round"/></svg>
<span style="left:1401px;top:404.92px;font-size:9.9px;font-weight:400;color:#000;">map</span>
<svg style="left:1390.8px;top:415.72999999999996px" width="8" height="8" viewBox="0 0 12 12"><rect x="0" y="0" width="12" height="12" rx="5" fill="#2c6ff6"/><path d="M2.9 6.4 L5.1 8.7 L9.2 3.3" stroke="#fff" stroke-width="1.5" fill="none" stroke-linecap="round" stroke-linejoin="round"/></svg>
<span style="left:1401px;top:414.95px;font-size:9.9px;font-weight:400;color:#000;">distance mi</span>
<svg style="left:1390.8px;top:425.76px" width="8" height="8" viewBox="0 0 12 12"><rect x="0.6" y="0.6" width="10.8" height="10.8" rx="3.8" fill="#fff" stroke="#7a7a7a" stroke-width="1.2"/></svg>
<span style="left:1401px;top:424.98px;font-size:9.9px;font-weight:400;color:#000;">distance km</span>
<svg style="left:1390.8px;top:435.78999999999996px" width="8" height="8" viewBox="0 0 12 12"><rect x="0" y="0" width="12" height="12" rx="5" fill="#2c6ff6"/><path d="M2.9 6.4 L5.1 8.7 L9.2 3.3" stroke="#fff" stroke-width="1.5" fill="none" stroke-linecap="round" stroke-linejoin="round"/></svg>
<span style="left:1401px;top:435.01px;font-size:9.9px;font-weight:400;color:#000;">freq</span>
<svg style="left:1390.8px;top:445.82px" width="8" height="8" viewBox="0 0 12 12"><rect x="0" y="0" width="12" height="12" rx="5" fill="#2c6ff6"/><path d="M2.9 6.4 L5.1 8.7 L9.2 3.3" stroke="#fff" stroke-width="1.5" fill="none" stroke-linecap="round" stroke-linejoin="round"/></svg>
<span style="left:1401px;top:445.04px;font-size:9.9px;font-weight:400;color:#000;">mode</span>
<svg style="left:1390.8px;top:455.84999999999997px" width="8" height="8" viewBox="0 0 12 12"><rect x="0" y="0" width="12" height="12" rx="5" fill="#2c6ff6"/><path d="M2.9 6.4 L5.1 8.7 L9.2 3.3" stroke="#fff" stroke-width="1.5" fill="none" stroke-linecap="round" stroke-linejoin="round"/></svg>
<span style="left:1401px;top:455.07px;font-size:9.9px;font-weight:400;color:#000;">type</span>
<svg style="left:1390.8px;top:465.88px" width="8" height="8" viewBox="0 0 12 12"><rect x="0" y="0" width="12" height="12" rx="5" fill="#2c6ff6"/><path d="M2.9 6.4 L5.1 8.7 L9.2 3.3" stroke="#fff" stroke-width="1.5" fill="none" stroke-linecap="round" stroke-linejoin="round"/></svg>
<span style="left:1401px;top:465.10px;font-size:9.9px;font-weight:400;color:#000;">snr</span>
<svg style="left:1390.8px;top:475.90999999999997px" width="8" height="8" viewBox="0 0 12 12"><rect x="0" y="0" width="12" height="12" rx="5" fill="#2c6ff6"/><path d="M2.9 6.4 L5.1 8.7 L9.2 3.3" stroke="#fff" stroke-width="1.5" fill="none" stroke-linecap="round" stroke-linejoin="round"/></svg>
<span style="left:1401px;top:475.13px;font-size:9.9px;font-weight:400;color:#000;">speed</span>
<svg style="left:1390.8px;top:485.94px" width="8" height="8" viewBox="0 0 12 12"><rect x="0" y="0" width="12" height="12" rx="5" fill="#2c6ff6"/><path d="M2.9 6.4 L5.1 8.7 L9.2 3.3" stroke="#fff" stroke-width="1.5" fill="none" stroke-linecap="round" stroke-linejoin="round"/></svg>
<span style="left:1401px;top:485.16px;font-size:9.9px;font-weight:400;color:#000;">time</span>
<svg style="left:1390.8px;top:495.96999999999997px" width="8" height="8" viewBox="0 0 12 12"><rect x="0" y="0" width="12" height="12" rx="5" fill="#2c6ff6"/><path d="M2.9 6.4 L5.1 8.7 L9.2 3.3" stroke="#fff" stroke-width="1.5" fill="none" stroke-linecap="round" stroke-linejoin="round"/></svg>
<span style="left:1401px;top:495.19px;font-size:9.9px;font-weight:400;color:#000;">seen</span>
<div style="left:19px;top:510px;width:1451px;height:2px;background:#2a6a22"></div>
<div style="left:19px;top:512px;width:1451px;height:21px;background:#f5f5f3"></div>
<div style="left:19px;top:533px;width:1451px;height:1px;background:#dadada"></div>
<svg style="left:465px;top:519px" width="8" height="8"><circle cx="3.6" cy="3.6" r="3.4" fill="#e8321e"/></svg>
<span style="left:477px;top:517.69px;font-size:11px;font-weight:700;color:#000;">Spotter (de)</span>
<svg style="left:1109px;top:519px" width="8" height="8"><circle cx="3.7" cy="3.6" r="3.4" fill="#0a14f0"/></svg>
<span style="left:1120.8px;top:517.69px;font-size:11px;font-weight:700;color:#000;">Spotted (dx)</span>
<div style="left:19px;top:534px;width:1451px;height:42px;background:#f6f6f6"></div>
<span style="left:25.1px;top:546.09px;font-size:11px;font-weight:700;color:#000;">callsign</span>
<div style="left:184px;top:542.2px;width:652px;height:25.4px;background:#fff;border:1px solid #d3d3d3;border-radius:5px;box-sizing:border-box"></div>
<span style="left:192.2px;top:548.08px;font-size:14.2px;font-weight:700;color:#a0a0a0;">spotter-callsign</span>
<div style="left:830.7px;top:542.2px;width:643px;height:25.4px;background:#fff;border:1px solid #d3d3d3;border-radius:5px;box-sizing:border-box"></div>
<span style="left:838.5px;top:548.08px;font-size:14.2px;font-weight:700;color:#a0a0a0;">spotted-callsign[,spotted-callsign]</span>
<div style="left:19px;top:576px;width:1451px;height:1px;background:#dddddd"></div>
<div style="left:19px;top:577px;width:1451px;height:1px;background:#f0f0f0"></div>
<div style="left:19px;top:578px;width:1451px;height:1px;background:#aaaaaa"></div>
<div style="left:19px;top:579px;width:1451px;height:23px;background:#ececec"></div>
<svg style="left:20px;top:586px" width="8" height="9"><circle cx="4.3" cy="4.5" r="3.5" fill="#e8321e"/></svg>
<span style="left:32.4px;top:585.29px;font-size:11px;font-weight:700;color:#000;">spotter</span>
<svg style="left:203px;top:586px" width="8" height="9"><circle cx="3.8" cy="4.2" r="3.3" fill="#0a14f0"/></svg>
<span style="left:215.1px;top:585.29px;font-size:11px;font-weight:700;color:#000;">spotted</span>
<span style="left:472.6px;top:585.29px;font-size:11px;font-weight:700;color:#000;">distance mi</span>
<span style="right:810.7px;top:585.29px;font-size:11px;font-weight:700;color:#000;">freq</span>
<span style="left:695.6px;top:585.29px;font-size:11px;font-weight:700;color:#000;">mode</span>
<span style="left:797.3px;transform:translateX(-50%);top:585.29px;font-size:11px;font-weight:700;color:#000;">type</span>
<span style="right:553.4px;top:585.29px;font-size:11px;font-weight:700;color:#000;">snr</span>
<span style="right:427.70000000000005px;top:585.29px;font-size:11px;font-weight:700;color:#000;">speed</span>
<span style="left:1065.2px;top:585.29px;font-size:11px;font-weight:700;color:#000;">time</span>
<span style="left:1244px;top:585.29px;font-size:11px;font-weight:700;color:#000;">seen</span>
<div style="left:19px;top:602px;width:1451px;height:1px;background:#c8c0c8"></div>
<div style="left:19px;top:603px;width:1451px;height:20px;background:#b9d8e5"></div>
<div style="left:19px;top:623px;width:1451px;height:1px;background:#d8d8d4"></div>
<svg style="left:25px;top:606px" width="16" height="11"><rect width="16" height="11" fill="#e3261c"/><rect width="6" height="11" fill="#1a7a2a"/><circle cx="6" cy="5.5" r="2.6" fill="#f5d53a"/><circle cx="6" cy="5.5" r="1.5" fill="#e3261c"/><rect x="0.25" y="0.25" width="15.5" height="10.5" fill="none" stroke="rgba(0,0,0,0.35)" stroke-width="0.5"/></svg>
<span style="left:46.8px;top:607.99px;font-size:11px;font-weight:700;color:#1034c6;">CT1EYQ</span>
<svg style="left:207px;top:606px" width="16" height="11"><rect width="16" height="11" fill="#5c9fd8"/><rect y="7" width="16" height="1" fill="#f2e02a"/><rect y="9" width="16" height="1" fill="#f2e02a"/><circle cx="2.5" cy="2.5" r="1" fill="#e33"/><rect x="0.25" y="0.25" width="15.5" height="10.5" fill="none" stroke="rgba(0,0,0,0.35)" stroke-width="0.5"/></svg>
<span style="left:229.5px;top:607.99px;font-size:11px;font-weight:700;color:#1034c6;">P49X</span>
<span style="right:950.8px;top:607.99px;font-size:11px;font-weight:400;color:#000;"><b>4127</b> mi</span>
<span style="right:810.8px;top:607.99px;font-size:11px;font-weight:400;color:#000;">14087.1</span>
<span style="left:700.3px;top:607.99px;font-size:11px;font-weight:400;color:#000;">RTTY</span>
<span style="left:798.9px;transform:translateX(-50%);top:607.99px;font-size:11px;font-weight:400;color:#000;">CQ</span>
<span style="right:547px;top:607.99px;font-size:11px;font-weight:400;color:#000;">19 dB</span>
<span style="right:432.79999999999995px;top:607.99px;font-size:11px;font-weight:400;color:#000;">45 bps</span>
<span style="left:1070.2px;top:607.99px;font-size:11px;font-weight:700;color:#1034c6;">1037z 03 Jan</span>
<span style="left:1248.2px;top:607.99px;font-size:11px;font-weight:700;color:#1034c6;">now</span>
<div style="left:19px;top:624px;width:1451px;height:20px;background:#b9d8e5"></div>
<div style="left:19px;top:644px;width:1451px;height:1px;background:#d8d8d4"></div>
<svg style="left:25px;top:627px" width="16" height="11"><rect width="16" height="11" fill="#fff"/><rect y="1" width="16" height="1.2" fill="#d8303a"/><rect y="3" width="16" height="1.2" fill="#d8303a"/><rect y="5" width="16" height="1.2" fill="#d8303a"/><rect y="7" width="16" height="1.2" fill="#d8303a"/><rect y="9" width="16" height="1.2" fill="#d8303a"/><rect width="7.5" height="6" fill="#2e4fb0"/><rect x="1" y="1" width="5.5" height="4" fill="#7f95d6" opacity="0.6"/><rect x="0.25" y="0.25" width="15.5" height="10.5" fill="none" stroke="rgba(0,0,0,0.35)" stroke-width="0.5"/></svg>
<span style="left:46.8px;top:628.99px;font-size:11px;font-weight:700;color:#1034c6;">K6FOD</span>
<svg style="left:207px;top:627px" width="16" height="11"><rect width="16" height="11" fill="#5c9fd8"/><rect y="7" width="16" height="1" fill="#f2e02a"/><rect y="9" width="16" height="1" fill="#f2e02a"/><circle cx="2.5" cy="2.5" r="1" fill="#e33"/><rect x="0.25" y="0.25" width="15.5" height="10.5" fill="none" stroke="rgba(0,0,0,0.35)" stroke-width="0.5"/></svg>
<span style="left:229.5px;top:628.99px;font-size:11px;font-weight:700;color:#1034c6;">P49X</span>
<span style="right:950.8px;top:628.99px;font-size:11px;font-weight:400;color:#000;"><b>3363</b> mi</span>
<span style="right:810.8px;top:628.99px;font-size:11px;font-weight:400;color:#000;">14087.2</span>
<span style="left:700.3px;top:628.99px;font-size:11px;font-weight:400;color:#000;">RTTY</span>
<span style="left:798.9px;transform:translateX(-50%);top:628.99px;font-size:11px;font-weight:400;color:#000;">CQ</span>
<span style="right:547px;top:628.99px;font-size:11px;font-weight:400;color:#000;">11 dB</span>
<span style="right:432.79999999999995px;top:628.99px;font-size:11px;font-weight:400;color:#000;">45 bps</span>
<span style="left:1070.2px;top:628.99px;font-size:11px;font-weight:700;color:#1034c6;">1037z 03 Jan</span>
<span style="left:1248.2px;top:628.99px;font-size:11px;font-weight:700;color:#1034c6;">now</span>
<div style="left:19px;top:645px;width:1451px;height:20px;background:#b9d8e5"></div>
<div style="left:19px;top:665px;width:1451px;height:1px;background:#d8d8d4"></div>
<svg style="left:25px;top:648px" width="16" height="11"><rect width="16" height="11" fill="#fff"/><rect y="1" width="16" height="1.2" fill="#d8303a"/><rect y="3" width="16" height="1.2" fill="#d8303a"/><rect y="5" width="16" height="1.2" fill="#d8303a"/><rect y="7" width="16" height="1.2" fill="#d8303a"/><rect y="9" width="16" height="1.2" fill="#d8303a"/><rect width="7.5" height="6" fill="#2e4fb0"/><rect x="1" y="1" width="5.5" height="4" fill="#7f95d6" opacity="0.6"/><rect x="0.25" y="0.25" width="15.5" height="10.5" fill="none" stroke="rgba(0,0,0,0.35)" stroke-width="0.5"/></svg>
<span style="left:46.8px;top:649.99px;font-size:11px;font-weight:700;color:#1034c6;">WV4P</span>
<svg style="left:207px;top:648px" width="16" height="11"><rect width="16" height="11" fill="#5c9fd8"/><rect y="7" width="16" height="1" fill="#f2e02a"/><rect y="9" width="16" height="1" fill="#f2e02a"/><circle cx="2.5" cy="2.5" r="1" fill="#e33"/><rect x="0.25" y="0.25" width="15.5" height="10.5" fill="none" stroke="rgba(0,0,0,0.35)" stroke-width="0.5"/></svg>
<span style="left:229.5px;top:649.99px;font-size:11px;font-weight:700;color:#1034c6;">P49X</span>
<span style="right:950.8px;top:649.99px;font-size:11px;font-weight:400;color:#000;"><b>1938</b> mi</span>
<span style="right:810.8px;top:649.99px;font-size:11px;font-weight:400;color:#000;">14087.2</span>
<span style="left:700.3px;top:649.99px;font-size:11px;font-weight:400;color:#000;">RTTY</span>
<span style="left:798.9px;transform:translateX(-50%);top:649.99px;font-size:11px;font-weight:400;color:#000;">CQ</span>
<span style="right:547px;top:649.99px;font-size:11px;font-weight:400;color:#000;">17 dB</span>
<span style="right:432.79999999999995px;top:649.99px;font-size:11px;font-weight:400;color:#000;">45 bps</span>
<span style="left:1070.2px;top:649.99px;font-size:11px;font-weight:700;color:#1034c6;">1036z 03 Jan</span>
<span style="left:1248.2px;top:649.99px;font-size:11px;font-weight:700;color:#1034c6;">now</span>
<div style="left:19px;top:666px;width:1451px;height:20px;background:#fefcee"></div>
<div style="left:19px;top:686px;width:1451px;height:1px;background:#d8d8d4"></div>
<svg style="left:25px;top:669px" width="16" height="11"><rect width="16" height="11" fill="#fff"/><rect y="1" width="16" height="1.2" fill="#d8303a"/><rect y="3" width="16" height="1.2" fill="#d8303a"/><rect y="5" width="16" height="1.2" fill="#d8303a"/><rect y="7" width="16" height="1.2" fill="#d8303a"/><rect y="9" width="16" height="1.2" fill="#d8303a"/><rect width="7.5" height="6" fill="#2e4fb0"/><rect x="1" y="1" width="5.5" height="4" fill="#7f95d6" opacity="0.6"/><rect x="0.25" y="0.25" width="15.5" height="10.5" fill="none" stroke="rgba(0,0,0,0.35)" stroke-width="0.5"/></svg>
<span style="left:46.8px;top:670.99px;font-size:11px;font-weight:700;color:#1034c6;">NG7M</span>
<svg style="left:207px;top:669px" width="16" height="11"><rect width="16" height="11" fill="#5c9fd8"/><rect y="7" width="16" height="1" fill="#f2e02a"/><rect y="9" width="16" height="1" fill="#f2e02a"/><circle cx="2.5" cy="2.5" r="1" fill="#e33"/><rect x="0.25" y="0.25" width="15.5" height="10.5" fill="none" stroke="rgba(0,0,0,0.35)" stroke-width="0.5"/></svg>
<span style="left:229.5px;top:670.99px;font-size:11px;font-weight:700;color:#1034c6;">P49X</span>
<span style="right:950.8px;top:670.99px;font-size:11px;font-weight:400;color:#000;"><b>3213</b> mi</span>
<span style="right:810.8px;top:670.99px;font-size:11px;font-weight:400;color:#000;">14087.2</span>
<span style="left:700.3px;top:670.99px;font-size:11px;font-weight:400;color:#000;">RTTY</span>
<span style="left:798.9px;transform:translateX(-50%);top:670.99px;font-size:11px;font-weight:400;color:#000;">CQ</span>
<span style="right:547px;top:670.99px;font-size:11px;font-weight:400;color:#000;">16 dB</span>
<span style="right:432.79999999999995px;top:670.99px;font-size:11px;font-weight:400;color:#000;">45 bps</span>
<span style="left:1070.2px;top:670.99px;font-size:11px;font-weight:700;color:#1034c6;">1036z 03 Jan</span>
<span style="left:1248.2px;top:670.99px;font-size:11px;font-weight:700;color:#1034c6;">now</span>
<div style="left:19px;top:687px;width:1451px;height:20px;background:#fefcee"></div>
<div style="left:19px;top:707px;width:1451px;height:1px;background:#d8d8d4"></div>
<svg style="left:25px;top:690px" width="16" height="11"><rect width="16" height="11" fill="#229e3a"/><path d="M8 1.2 L14.5 5.5 L8 9.8 L1.5 5.5 Z" fill="#f4d83a"/><circle cx="8" cy="5.5" r="2.4" fill="#2a3f9a"/><rect x="0.25" y="0.25" width="15.5" height="10.5" fill="none" stroke="rgba(0,0,0,0.35)" stroke-width="0.5"/></svg>
<span style="left:46.8px;top:691.99px;font-size:11px;font-weight:700;color:#1034c6;">PY2KNK</span>
<svg style="left:207px;top:690px" width="16" height="11"><rect width="16" height="11" fill="#f4f4f4"/><rect x="6.8" width="2.4" height="11" fill="#d8232a"/><rect y="4.3" width="16" height="2.4" fill="#d8232a"/><rect x="0.25" y="0.25" width="15.5" height="10.5" fill="none" stroke="rgba(0,0,0,0.35)" stroke-width="0.5"/></svg>
<span style="left:229.5px;top:691.99px;font-size:11px;font-weight:700;color:#1034c6;">GB2WWA</span>
<span style="right:950.8px;top:691.99px;font-size:11px;font-weight:400;color:#000;"><b>5971</b> mi</span>
<span style="right:810.8px;top:691.99px;font-size:11px;font-weight:400;color:#000;">14088.4</span>
<span style="left:700.3px;top:691.99px;font-size:11px;font-weight:400;color:#000;">RTTY</span>
<span style="left:798.9px;transform:translateX(-50%);top:691.99px;font-size:11px;font-weight:400;color:#000;">CQ</span>
<span style="right:547px;top:691.99px;font-size:11px;font-weight:400;color:#000;">13 dB</span>
<span style="right:432.79999999999995px;top:691.99px;font-size:11px;font-weight:400;color:#000;">45 bps</span>
<span style="left:1070.2px;top:691.99px;font-size:11px;font-weight:700;color:#1034c6;">1036z 03 Jan</span>
<span style="left:1248.2px;top:691.99px;font-size:11px;font-weight:700;color:#1034c6;">now</span>
<div style="left:19px;top:708px;width:1451px;height:20px;background:#fefcee"></div>
<div style="left:19px;top:728px;width:1451px;height:1px;background:#d8d8d4"></div>
<svg style="left:25px;top:711px" width="16" height="11"><rect width="16" height="11" fill="#fff"/><rect y="1" width="16" height="1.2" fill="#d8303a"/><rect y="3" width="16" height="1.2" fill="#d8303a"/><rect y="5" width="16" height="1.2" fill="#d8303a"/><rect y="7" width="16" height="1.2" fill="#d8303a"/><rect y="9" width="16" height="1.2" fill="#d8303a"/><rect width="7.5" height="6" fill="#2e4fb0"/><rect x="1" y="1" width="5.5" height="4" fill="#7f95d6" opacity="0.6"/><rect x="0.25" y="0.25" width="15.5" height="10.5" fill="none" stroke="rgba(0,0,0,0.35)" stroke-width="0.5"/></svg>
<span style="left:46.8px;top:712.99px;font-size:11px;font-weight:700;color:#1034c6;">W6YX</span>
<svg style="left:207px;top:711px" width="16" height="11"><rect width="16" height="11" fill="#5c9fd8"/><rect y="7" width="16" height="1" fill="#f2e02a"/><rect y="9" width="16" height="1" fill="#f2e02a"/><circle cx="2.5" cy="2.5" r="1" fill="#e33"/><rect x="0.25" y="0.25" width="15.5" height="10.5" fill="none" stroke="rgba(0,0,0,0.35)" stroke-width="0.5"/></svg>
<span style="left:229.5px;top:712.99px;font-size:11px;font-weight:700;color:#1034c6;">P49X</span>
<span style="right:950.8px;top:712.99px;font-size:11px;font-weight:400;color:#000;"><b>3641</b> mi</span>
<span style="right:810.8px;top:712.99px;font-size:11px;font-weight:400;color:#000;">14087.1</span>
<span style="left:700.3px;top:712.99px;font-size:11px;font-weight:400;color:#000;">RTTY</span>
<span style="left:798.9px;transform:translateX(-50%);top:712.99px;font-size:11px;font-weight:400;color:#000;">CQ</span>
<span style="right:547px;top:712.99px;font-size:11px;font-weight:400;color:#000;">37 dB</span>
<span style="right:432.79999999999995px;top:712.99px;font-size:11px;font-weight:400;color:#000;">45 bps</span>
<span style="left:1070.2px;top:712.99px;font-size:11px;font-weight:700;color:#1034c6;">1035z 03 Jan</span>
<span style="left:1248.2px;top:712.99px;font-size:11px;font-weight:700;color:#1034c6;">76 seconds ago</span>
<div style="left:19px;top:729px;width:1451px;height:20px;background:#fefcee"></div>
<div style="left:19px;top:749px;width:1451px;height:1px;background:#d8d8d4"></div>
<svg style="left:25px;top:732px" width="16" height="11"><rect width="16" height="5.5" fill="#fff"/><rect y="5.5" width="16" height="5.5" fill="#d8232a"/><path d="M0 0 L8 5.5 L0 11 Z" fill="#2c55a8"/><rect x="0.25" y="0.25" width="15.5" height="10.5" fill="none" stroke="rgba(0,0,0,0.35)" stroke-width="0.5"/></svg>
<span style="left:46.8px;top:733.99px;font-size:11px;font-weight:700;color:#1034c6;">OK2ZAW</span>
<svg style="left:207px;top:732px" width="16" height="11"><rect width="5.3" height="11" fill="#111"/><rect x="5.3" width="5.4" height="11" fill="#f7e03a"/><rect x="10.7" width="5.3" height="11" fill="#e3261c"/><rect x="0.25" y="0.25" width="15.5" height="10.5" fill="none" stroke="rgba(0,0,0,0.35)" stroke-width="0.5"/></svg>
<span style="left:229.5px;top:733.99px;font-size:11px;font-weight:700;color:#1034c6;">ON8BB</span>
<span style="right:950.8px;top:733.99px;font-size:11px;font-weight:400;color:#000;"><b>528</b> mi</span>
<span style="right:810.8px;top:733.99px;font-size:11px;font-weight:400;color:#000;">14100.3</span>
<span style="left:700.3px;top:733.99px;font-size:11px;font-weight:400;color:#000;">RTTY</span>
<span style="left:798.9px;transform:translateX(-50%);top:733.99px;font-size:11px;font-weight:400;color:#000;">CQ</span>
<span style="right:547px;top:733.99px;font-size:11px;font-weight:400;color:#000;">39 dB</span>
<span style="right:432.79999999999995px;top:733.99px;font-size:11px;font-weight:400;color:#000;">45 bps</span>
<span style="left:1070.2px;top:733.99px;font-size:11px;font-weight:700;color:#1034c6;">1035z 03 Jan</span>
<span style="left:1248.2px;top:733.99px;font-size:11px;font-weight:700;color:#1034c6;">82 seconds ago</span>
<div style="left:19px;top:750px;width:1451px;height:20px;background:#fefcee"></div>
<div style="left:19px;top:770px;width:1451px;height:1px;background:#d8d8d4"></div>
<svg style="left:25px;top:753px" width="16" height="11"><rect width="16" height="3.7" fill="#fff"/><rect y="3.7" width="16" height="3.6" fill="#169b62"/><rect y="7.3" width="16" height="3.7" fill="#d62612"/><rect x="0.25" y="0.25" width="15.5" height="10.5" fill="none" stroke="rgba(0,0,0,0.35)" stroke-width="0.5"/></svg>
<span style="left:46.8px;top:754.99px;font-size:11px;font-weight:700;color:#1034c6;">LZ3CB</span>
<svg style="left:207px;top:753px" width="16" height="11"><rect width="16" height="11" fill="#f4f4f4"/><rect x="6.8" width="2.4" height="11" fill="#d8232a"/><rect y="4.3" width="16" height="2.4" fill="#d8232a"/><rect x="0.25" y="0.25" width="15.5" height="10.5" fill="none" stroke="rgba(0,0,0,0.35)" stroke-width="0.5"/></svg>
<span style="left:229.5px;top:754.99px;font-size:11px;font-weight:700;color:#1034c6;">GB2WWA</span>
<span style="right:950.8px;top:754.99px;font-size:11px;font-weight:400;color:#000;"><b>1433</b> mi</span>
<span style="right:810.8px;top:754.99px;font-size:11px;font-weight:400;color:#000;">14088.4</span>
<span style="left:700.3px;top:754.99px;font-size:11px;font-weight:400;color:#000;">RTTY</span>
<span style="left:798.9px;transform:translateX(-50%);top:754.99px;font-size:11px;font-weight:400;color:#000;">CQ</span>
<span style="right:547px;top:754.99px;font-size:11px;font-weight:400;color:#000;">12 dB</span>
<span style="right:432.79999999999995px;top:754.99px;font-size:11px;font-weight:400;color:#000;">45 bps</span>
<span style="left:1070.2px;top:754.99px;font-size:11px;font-weight:700;color:#1034c6;">1035z 03 Jan</span>
<span style="left:1248.2px;top:754.99px;font-size:11px;font-weight:700;color:#1034c6;">89 seconds ago</span>
<div style="left:19px;top:771px;width:1451px;height:20px;background:#fefcee"></div>
<div style="left:19px;top:791px;width:1451px;height:1px;background:#d8d8d4"></div>
<svg style="left:25px;top:774px" width="16" height="11"><rect width="16" height="11" fill="#229e3a"/><path d="M8 1.2 L14.5 5.5 L8 9.8 L1.5 5.5 Z" fill="#f4d83a"/><circle cx="8" cy="5.5" r="2.4" fill="#2a3f9a"/><rect x="0.25" y="0.25" width="15.5" height="10.5" fill="none" stroke="rgba(0,0,0,0.35)" stroke-width="0.5"/></svg>
<span style="left:46.8px;top:775.99px;font-size:11px;font-weight:700;color:#1034c6;">PY2KNK</span>
<svg style="left:207px;top:774px" width="16" height="11"><rect width="16" height="11" fill="#5c9fd8"/><rect y="7" width="16" height="1" fill="#f2e02a"/><rect y="9" width="16" height="1" fill="#f2e02a"/><circle cx="2.5" cy="2.5" r="1" fill="#e33"/><rect x="0.25" y="0.25" width="15.5" height="10.5" fill="none" stroke="rgba(0,0,0,0.35)" stroke-width="0.5"/></svg>
<span style="left:229.5px;top:775.99px;font-size:11px;font-weight:700;color:#1034c6;">P49X</span>
<span style="right:950.8px;top:775.99px;font-size:11px;font-weight:400;color:#000;"><b>2876</b> mi</span>
<span style="right:810.8px;top:775.99px;font-size:11px;font-weight:400;color:#000;">14087.2</span>
<span style="left:700.3px;top:775.99px;font-size:11px;font-weight:400;color:#000;">RTTY</span>
<span style="left:798.9px;transform:translateX(-50%);top:775.99px;font-size:11px;font-weight:400;color:#000;">CQ</span>
<span style="right:547px;top:775.99px;font-size:11px;font-weight:400;color:#000;">16 dB</span>
<span style="right:432.79999999999995px;top:775.99px;font-size:11px;font-weight:400;color:#000;">45 bps</span>
<span style="left:1070.2px;top:775.99px;font-size:11px;font-weight:700;color:#1034c6;">1035z 03 Jan</span>
<span style="left:1248.2px;top:775.99px;font-size:11px;font-weight:700;color:#1034c6;">93 seconds ago</span>
<div style="left:19px;top:792px;width:1451px;height:20px;background:#fefcee"></div>
<div style="left:19px;top:812px;width:1451px;height:1px;background:#d8d8d4"></div>
<svg style="left:25px;top:795px" width="16" height="11"><rect width="16" height="11" fill="#fff"/><rect y="1" width="16" height="1.2" fill="#d8303a"/><rect y="3" width="16" height="1.2" fill="#d8303a"/><rect y="5" width="16" height="1.2" fill="#d8303a"/><rect y="7" width="16" height="1.2" fill="#d8303a"/><rect y="9" width="16" height="1.2" fill="#d8303a"/><rect width="7.5" height="6" fill="#2e4fb0"/><rect x="1" y="1" width="5.5" height="4" fill="#7f95d6" opacity="0.6"/><rect x="0.25" y="0.25" width="15.5" height="10.5" fill="none" stroke="rgba(0,0,0,0.35)" stroke-width="0.5"/></svg>
<span style="left:46.8px;top:796.99px;font-size:11px;font-weight:700;color:#1034c6;">W3RGA</span>
<svg style="left:207px;top:795px" width="16" height="11"><rect width="16" height="11" fill="#5c9fd8"/><rect y="7" width="16" height="1" fill="#f2e02a"/><rect y="9" width="16" height="1" fill="#f2e02a"/><circle cx="2.5" cy="2.5" r="1" fill="#e33"/><rect x="0.25" y="0.25" width="15.5" height="10.5" fill="none" stroke="rgba(0,0,0,0.35)" stroke-width="0.5"/></svg>
<span style="left:229.5px;top:796.99px;font-size:11px;font-weight:700;color:#1034c6;">P49X</span>
<span style="right:950.8px;top:796.99px;font-size:11px;font-weight:400;color:#000;"><b>2006</b> mi</span>
<span style="right:810.8px;top:796.99px;font-size:11px;font-weight:400;color:#000;">14087.2</span>
<span style="left:700.3px;top:796.99px;font-size:11px;font-weight:400;color:#000;">RTTY</span>
<span style="left:798.9px;transform:translateX(-50%);top:796.99px;font-size:11px;font-weight:400;color:#000;">CQ</span>
<span style="right:547px;top:796.99px;font-size:11px;font-weight:400;color:#000;">44 dB</span>
<span style="right:432.79999999999995px;top:796.99px;font-size:11px;font-weight:400;color:#000;">45 bps</span>
<span style="left:1070.2px;top:796.99px;font-size:11px;font-weight:700;color:#1034c6;">1035z 03 Jan</span>
<span style="left:1248.2px;top:796.99px;font-size:11px;font-weight:700;color:#1034c6;">101 seconds ago</span>
<div style="left:19px;top:813px;width:1451px;height:20px;background:#fefcee"></div>
<div style="left:19px;top:833px;width:1451px;height:1px;background:#d8d8d4"></div>
<svg style="left:25px;top:816px" width="16" height="11"><rect width="16" height="11" fill="#fff"/><rect y="1" width="16" height="1.2" fill="#d8303a"/><rect y="3" width="16" height="1.2" fill="#d8303a"/><rect y="5" width="16" height="1.2" fill="#d8303a"/><rect y="7" width="16" height="1.2" fill="#d8303a"/><rect y="9" width="16" height="1.2" fill="#d8303a"/><rect width="7.5" height="6" fill="#2e4fb0"/><rect x="1" y="1" width="5.5" height="4" fill="#7f95d6" opacity="0.6"/><rect x="0.25" y="0.25" width="15.5" height="10.5" fill="none" stroke="rgba(0,0,0,0.35)" stroke-width="0.5"/></svg>
<span style="left:46.8px;top:817.99px;font-size:11px;font-weight:700;color:#1034c6;">KM3T-5</span>
<svg style="left:207px;top:816px" width="16" height="11"><rect width="16" height="11" fill="#5c9fd8"/><rect y="7" width="16" height="1" fill="#f2e02a"/><rect y="9" width="16" height="1" fill="#f2e02a"/><circle cx="2.5" cy="2.5" r="1" fill="#e33"/><rect x="0.25" y="0.25" width="15.5" height="10.5" fill="none" stroke="rgba(0,0,0,0.35)" stroke-width="0.5"/></svg>
<span style="left:229.5px;top:817.99px;font-size:11px;font-weight:700;color:#1034c6;">P49X</span>
<span style="right:950.8px;top:817.99px;font-size:11px;font-weight:400;color:#000;"><b>2098</b> mi</span>
<span style="right:810.8px;top:817.99px;font-size:11px;font-weight:400;color:#000;">14087.2</span>
<span style="left:700.3px;top:817.99px;font-size:11px;font-weight:400;color:#000;">RTTY</span>
<span style="left:798.9px;transform:translateX(-50%);top:817.99px;font-size:11px;font-weight:400;color:#000;">CQ</span>
<span style="right:547px;top:817.99px;font-size:11px;font-weight:400;color:#000;">18 dB</span>
<span style="right:432.79999999999995px;top:817.99px;font-size:11px;font-weight:400;color:#000;">45 bps</span>
<span style="left:1070.2px;top:817.99px;font-size:11px;font-weight:700;color:#1034c6;">1034z 03 Jan</span>
<span style="left:1248.2px;top:817.99px;font-size:11px;font-weight:700;color:#1034c6;">2 minutes ago</span>
<div style="left:19px;top:834px;width:1451px;height:20px;background:#fefcee"></div>
<div style="left:19px;top:854px;width:1451px;height:1px;background:#d8d8d4"></div>
<svg style="left:25px;top:837px" width="16" height="11"><rect width="16" height="11" fill="#e3261c"/><rect width="6" height="11" fill="#1a7a2a"/><circle cx="6" cy="5.5" r="2.6" fill="#f5d53a"/><circle cx="6" cy="5.5" r="1.5" fill="#e3261c"/><rect x="0.25" y="0.25" width="15.5" height="10.5" fill="none" stroke="rgba(0,0,0,0.35)" stroke-width="0.5"/></svg>
<span style="left:46.8px;top:838.99px;font-size:11px;font-weight:700;color:#1034c6;">CT1EYQ</span>
<svg style="left:207px;top:837px" width="16" height="11"><rect width="16" height="11" fill="#f4f4f4"/><rect x="6.8" width="2.4" height="11" fill="#d8232a"/><rect y="4.3" width="16" height="2.4" fill="#d8232a"/><rect x="0.25" y="0.25" width="15.5" height="10.5" fill="none" stroke="rgba(0,0,0,0.35)" stroke-width="0.5"/></svg>
<span style="left:229.5px;top:838.99px;font-size:11px;font-weight:700;color:#1034c6;">GB2WWA</span>
<span style="right:950.8px;top:838.99px;font-size:11px;font-weight:400;color:#000;"><b>1016</b> mi</span>
<span style="right:810.8px;top:838.99px;font-size:11px;font-weight:400;color:#000;">14088.3</span>
<span style="left:700.3px;top:838.99px;font-size:11px;font-weight:400;color:#000;">RTTY</span>
<span style="left:798.9px;transform:translateX(-50%);top:838.99px;font-size:11px;font-weight:400;color:#000;">CQ</span>
<span style="right:547px;top:838.99px;font-size:11px;font-weight:400;color:#000;">17 dB</span>
<span style="right:432.79999999999995px;top:838.99px;font-size:11px;font-weight:400;color:#000;">45 bps</span>
<span style="left:1070.2px;top:838.99px;font-size:11px;font-weight:700;color:#1034c6;">1034z 03 Jan</span>
<span style="left:1248.2px;top:838.99px;font-size:11px;font-weight:700;color:#1034c6;">2 minutes ago</span>
</body></html>
